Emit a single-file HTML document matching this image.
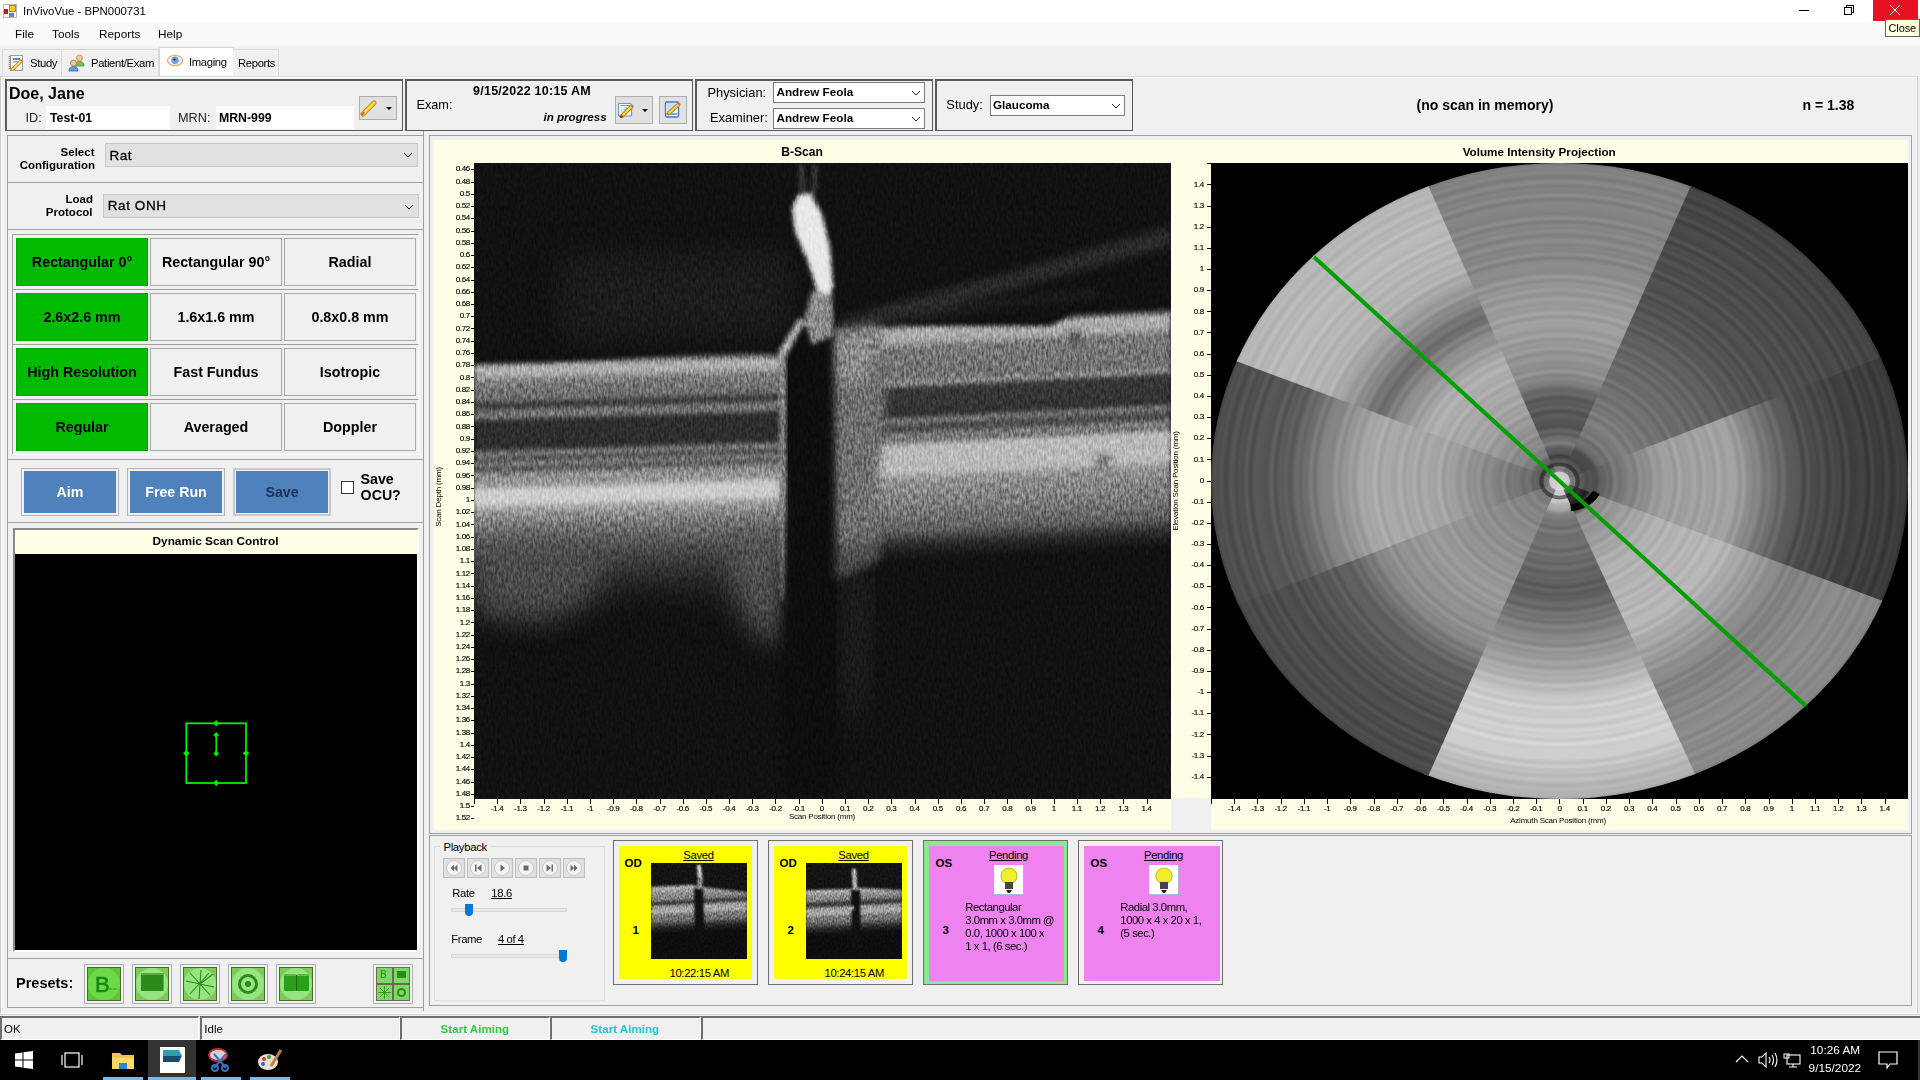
<!DOCTYPE html>
<html><head><meta charset="utf-8">
<style>
*{margin:0;padding:0;box-sizing:border-box}
html,body{width:1920px;height:1080px;overflow:hidden;background:#f0f0f0;font-family:"Liberation Sans",sans-serif;color:#000}
.a{position:absolute}
.t{position:absolute;white-space:nowrap;line-height:1}
.b{font-weight:bold}
.box{position:absolute;border:1px solid #a0a0a0}
.dbox{position:absolute;border:1px solid #646464}
.gbtn{position:absolute;background:#f0f0f0;border:1px solid #a9a9a9;font-weight:bold;font-size:14.3px;display:flex;align-items:center;justify-content:center}
.gbtn.on{background:#00bb00;border-color:#00a800}
.blue{position:absolute;background:#4f81bd;border:3px solid #f0f0f0;outline:1px solid #b4b4b4;font-weight:bold;font-size:14px;color:#fff;display:flex;align-items:center;justify-content:center}
.combo{position:absolute;background:#fff;border:1px solid #7a7a7a;font-weight:bold;font-size:12px}
.yl{fill:#000}
</style></head><body>

<!-- title bar -->
<div class="a" style="left:0;top:0;width:1920px;height:23px;background:#fff"></div>
<div id="titleicon" class="a" style="left:3px;top:4px;width:14px;height:14px">
 <div class="a" style="left:0;top:0;width:14px;height:14px;border:1px solid #b8b8b8;background:#fff"></div>
 <div class="a" style="left:6px;top:1px;width:7px;height:7px;background:#f8cc30;border:1px solid #b08a10"></div>
 <div class="a" style="left:1px;top:5px;width:4px;height:5px;background:#c81818"></div>
 <div class="a" style="left:6px;top:9px;width:5px;height:4px;background:#4a86e8"></div>
</div>
<div class="t" style="left:23px;top:6.3px;font-size:11.4px">InVivoVue - BPN000731</div>
<!-- window controls -->
<div class="a" style="left:1799px;top:10px;width:10px;height:1px;background:#000"></div>
<div class="a" style="left:1846px;top:5px;width:8px;height:8px;border:1px solid #000;background:#fff"></div>
<div class="a" style="left:1844px;top:7px;width:8px;height:8px;border:1px solid #000;background:#fff"></div>
<div class="a" style="left:1873px;top:0;width:45px;height:21px;background:#e81123"></div>
<svg class="a" style="left:1889px;top:4px" width="12" height="12"><path d="M1 1L11 11M11 1L1 11" stroke="#fff" stroke-width="1"/></svg>

<!-- menu -->
<div class="a" style="left:0;top:23px;width:1920px;height:23px;background:#f9f9f9"></div>
<div class="t" style="left:15px;top:28.8px;font-size:11.8px">File</div>
<div class="t" style="left:52px;top:28.8px;font-size:11.8px">Tools</div>
<div class="t" style="left:99px;top:28.8px;font-size:11.8px">Reports</div>
<div class="t" style="left:158px;top:28.8px;font-size:11.8px">Help</div>

<!-- tabs -->
<div id="tabs">
<div class="a" style="left:0;top:46px;width:1920px;height:31px;background:#f0f0f0"></div>
<div class="a" style="left:2px;top:49px;width:60px;height:28px;border:1px solid #d9d9d9;border-bottom:none;background:#f0f0f0"></div>
<div class="a" style="left:62px;top:49px;width:97px;height:28px;border:1px solid #d9d9d9;border-bottom:none;border-left:none;background:#f0f0f0"></div>
<div class="a" style="left:159px;top:47px;width:75px;height:31px;border:1px solid #d9d9d9;border-bottom:none;background:#fff"></div>
<div class="a" style="left:233px;top:49px;width:46px;height:28px;border:1px solid #d9d9d9;border-bottom:none;border-left:none;background:#f0f0f0"></div>
<!-- study icon -->
<svg class="a" style="left:8px;top:55px" width="16" height="16">
 <rect x="2.5" y="0.5" width="12" height="15" fill="#fff" stroke="#9a9a9a"/>
 <path d="M1.5 1V15" stroke="#d06030" stroke-width="1.5" stroke-dasharray="1 1"/>
 <rect x="5" y="3" width="7" height="2" fill="#5a8ad0"/><rect x="5" y="6" width="5" height="1.5" fill="#8ab0e0"/>
 <path d="M4 15L13 6" stroke="#c08020" stroke-width="3.5" stroke-linecap="round"/><path d="M4 15L13 6" stroke="#f8d860" stroke-width="2"/>
</svg>
<div class="t" style="left:30px;top:57.8px;font-size:11.3px;letter-spacing:-0.35px">Study</div>
<!-- patient icon -->
<svg class="a" style="left:68px;top:54px" width="18" height="18">
 <circle cx="11.5" cy="4" r="3" fill="#f0c890" stroke="#c89040" stroke-width="0.8"/>
 <path d="M7 12Q7 7.5 11.5 7.5Q16 7.5 16 12Z" fill="#70c060" stroke="#4a9040" stroke-width="0.8"/>
 <circle cx="5.5" cy="9" r="3" fill="#f0c890" stroke="#b07840" stroke-width="0.8"/>
 <path d="M1 17Q1 12.5 5.5 12.5Q10 12.5 10 17Z" fill="#5aa0e8" stroke="#3a70b0" stroke-width="0.8"/>
</svg>
<div class="t" style="left:91px;top:57.8px;font-size:11.3px;letter-spacing:-0.35px">Patient/Exam</div>
<!-- imaging eye -->
<svg class="a" style="left:166px;top:54px" width="18" height="14">
 <ellipse cx="9" cy="6.5" rx="7.5" ry="5.2" fill="#f4f4f8" stroke="#e8a870" stroke-width="1.2"/>
 <circle cx="9" cy="6.3" r="3.8" fill="#72a2e0"/>
 <circle cx="8.5" cy="5.5" r="1" fill="#000"/>
</svg>
<div class="t" style="left:189px;top:56.6px;font-size:11.3px;letter-spacing:-0.35px">Imaging</div>
<div class="t" style="left:238px;top:57.8px;font-size:11.3px;letter-spacing:-0.35px">Reports</div>
<div class="a" style="left:0;top:76px;width:1918px;height:1px;background:#d9d9d9"></div><div class="a" style="left:1px;top:77px;width:1916px;height:1px;background:#ffffff"></div>
</div>

<!-- header -->
<div id="header">
<!-- patient box -->
<div class="a" style="left:5px;top:79px;width:398px;height:52px;border:2px solid #5a5a5a;border-right-width:1px;border-bottom-width:1px"></div>
<div class="t b" style="left:9px;top:85.6px;font-size:16px">Doe, Jane</div>
<div class="a" style="left:46px;top:106px;width:124px;height:23px;background:#fff"></div>
<div class="t" style="left:25.5px;top:111.9px;font-size:12.7px;color:#222">ID:</div>
<div class="t b" style="left:50px;top:112.3px;font-size:12.3px">Test-01</div>
<div class="a" style="left:216px;top:106px;width:138px;height:23px;background:#fff"></div>
<div class="t" style="left:178px;top:111.7px;font-size:12.7px;color:#222">MRN:</div>
<div class="t b" style="left:219px;top:112.1px;font-size:12.3px">MRN-999</div>
<div class="a" style="left:359px;top:96px;width:38px;height:24px;background:#e1e1e1;border:1px solid #adadad"></div>
<svg class="a" style="left:360px;top:99px" width="20" height="18"><path d="M3 15L14 4" stroke="#c89000" stroke-width="5" stroke-linecap="round"/><path d="M3 15L14 4" stroke="#f5d850" stroke-width="3" stroke-linecap="round"/><path d="M2 16L4 13" stroke="#b07030" stroke-width="2"/></svg>
<svg class="a" style="left:386px;top:107px" width="7" height="4"><path d="M0 0H6L3 3Z" fill="#000"/></svg>

<!-- exam box -->
<div class="a" style="left:405px;top:79px;width:288px;height:52px;border:1px solid #5a5a5a;border-left-width:2px;border-top-width:2px"></div>
<div class="t" style="left:416.5px;top:98.7px;font-size:12.7px">Exam:</div>
<div class="t b" style="left:473px;top:85.3px;font-size:12.5px;letter-spacing:0.25px">9/15/2022 10:15 AM</div>
<div class="t b" style="left:543.5px;top:110.7px;font-size:11.6px;font-style:italic">in progress</div>
<div class="a" style="left:615px;top:96px;width:38px;height:28px;background:#e1e1e1;border:1px solid #adadad"></div>
<svg class="a" style="left:617px;top:102px" width="18" height="16">
 <rect x="1.5" y="1.5" width="13" height="12.5" rx="1" fill="#fff" stroke="#6a9ae0" stroke-width="1.2"/>
 <rect x="3.5" y="3" width="9.5" height="1" fill="#60b060"/>
 <path d="M4 6H5M4 8H5M4 10H5M6.5 6H10M6.5 8H10" stroke="#80a8e0" stroke-width="1"/>
 <path d="M4.5 14.5L14.5 4.5" stroke="#c07820" stroke-width="4" stroke-linecap="round"/>
 <path d="M4.5 14.5L14.5 4.5" stroke="#f4d850" stroke-width="2.2"/>
 <path d="M3.5 15.5L5.5 13.5" stroke="#704010" stroke-width="2"/>
</svg>
<svg class="a" style="left:642px;top:109px" width="7" height="4"><path d="M0 0H6L3 3Z" fill="#000"/></svg>
<div class="a" style="left:659px;top:96px;width:28px;height:28px;background:#e1e1e1;border:1px solid #adadad"></div>
<svg class="a" style="left:664px;top:101px" width="18" height="17">
 <rect x="1.5" y="1" width="13" height="15" rx="1.2" fill="#fff" stroke="#3a78d0" stroke-width="1.3"/>
 <rect x="2.5" y="2" width="9" height="9" fill="#c8dcf8"/>
 <rect x="2.5" y="12" width="11" height="2" fill="#5ab0f0"/>
 <path d="M4.5 12.5L14.5 3.5" stroke="#c07820" stroke-width="4" stroke-linecap="round"/>
 <path d="M4.5 12.5L14.5 3.5" stroke="#f4d850" stroke-width="2.2"/>
</svg>

<!-- physician box -->
<div class="a" style="left:695px;top:79px;width:238px;height:52px;border:1px solid #5a5a5a;border-left-width:2px;border-top-width:2px"></div>
<div class="t" style="left:707.4px;top:86.6px;font-size:12.9px">Physician:</div>
<div class="t" style="left:709.9px;top:111.8px;font-size:12.9px">Examiner:</div>
<div class="combo" style="left:773px;top:82px;width:152px;height:21px"></div>
<div class="t b" style="left:776.5px;top:86.1px;font-size:11.7px">Andrew Feola</div>
<svg class="a" style="left:911px;top:90px" width="10" height="6"><path d="M1 1L5 5L9 1" stroke="#222" fill="none"/></svg>
<div class="combo" style="left:773px;top:108px;width:152px;height:21px"></div>
<div class="t b" style="left:776.5px;top:111.6px;font-size:11.7px">Andrew Feola</div>
<svg class="a" style="left:911px;top:116px" width="10" height="6"><path d="M1 1L5 5L9 1" stroke="#222" fill="none"/></svg>

<!-- study box -->
<div class="a" style="left:935px;top:79px;width:198px;height:52px;border:1px solid #5a5a5a;border-left-width:2px;border-top-width:2px"></div>
<div class="t" style="left:946.3px;top:98.8px;font-size:12.9px">Study:</div>
<div class="combo" style="left:990px;top:95px;width:135px;height:21px"></div>
<div class="t b" style="left:993px;top:98.5px;font-size:11.7px">Glaucoma</div>
<svg class="a" style="left:1111px;top:103px" width="10" height="6"><path d="M1 1L5 5L9 1" stroke="#222" fill="none"/></svg>

<div class="t b" style="left:1416.5px;top:98.1px;font-size:14px">(no scan in memory)</div>
<div class="t b" style="left:1802.5px;top:98.0px;font-size:14px">n = 1.38</div>
</div>

<!-- left panel -->
<div id="left">
<!-- outer left panel border -->
<div class="a" style="left:0;top:76px;width:1px;height:938px;background:#c8c8c8"></div><div class="a" style="left:1px;top:77px;width:1px;height:936px;background:#fff"></div>
<div class="a" style="left:7px;top:135px;width:417px;height:48px;border:1px solid #a0a0a0"></div>
<div class="t b" style="left:0;top:146.9px;width:94.5px;text-align:right;font-size:11.5px">Select</div><div class="t b" style="left:0;top:160.1px;width:95px;text-align:right;font-size:11.5px">Configuration</div>
<div class="a" style="left:105px;top:143px;width:313px;height:24px;background:#e1e1e1;border:1px solid #c8c8c8"></div>
<div class="t" style="left:109.4px;top:148.7px;font-size:13.5px;letter-spacing:0.6px;-webkit-text-stroke:0.3px #000">Rat</div>
<svg class="a" style="left:403px;top:152px" width="10" height="6"><path d="M1 1L5 5L9 1" stroke="#000" fill="none"/></svg>
<div class="a" style="left:7px;top:182px;width:417px;height:48px;border:1px solid #a0a0a0"></div>
<div class="t b" style="left:0;top:193.9px;width:93px;text-align:right;font-size:11.5px">Load</div><div class="t b" style="left:0;top:207.1px;width:92.5px;text-align:right;font-size:11.5px">Protocol</div>
<div class="a" style="left:103px;top:194px;width:316px;height:24px;background:#e1e1e1;border:1px solid #c8c8c8"></div>
<div class="t" style="left:107.7px;top:199.1px;font-size:13.5px;letter-spacing:0.6px;-webkit-text-stroke:0.3px #000">Rat ONH</div>
<svg class="a" style="left:404px;top:204px" width="10" height="6"><path d="M1 1L5 5L9 1" stroke="#000" fill="none"/></svg>
<!-- grid -->
<div class="a" style="left:7px;top:229px;width:417px;height:231px;border:1px solid #a0a0a0"></div>
<div class="a" style="left:12px;top:234px;width:407px;height:56px;border:1px solid #a0a0a0;border-right-color:#fff;border-bottom-color:#fff"></div>
<div class="a" style="left:12px;top:289px;width:407px;height:56px;border:1px solid #a0a0a0;border-right-color:#fff;border-bottom-color:#fff"></div>
<div class="a" style="left:12px;top:344px;width:407px;height:56px;border:1px solid #a0a0a0;border-right-color:#fff;border-bottom-color:#fff"></div>
<div class="a" style="left:12px;top:399px;width:407px;height:56px;border:1px solid #a0a0a0;border-right-color:#fff;border-bottom-color:#fff"></div>
<div class="gbtn on" style="left:16px;top:238px;width:132px;height:48px">Rectangular 0°</div>
<div class="gbtn" style="left:150px;top:238px;width:132px;height:48px">Rectangular 90°</div>
<div class="gbtn" style="left:284px;top:238px;width:132px;height:48px">Radial</div>
<div class="gbtn on" style="left:16px;top:293px;width:132px;height:48px">2.6x2.6 mm</div>
<div class="gbtn" style="left:150px;top:293px;width:132px;height:48px">1.6x1.6 mm</div>
<div class="gbtn" style="left:284px;top:293px;width:132px;height:48px">0.8x0.8 mm</div>
<div class="gbtn on" style="left:16px;top:348px;width:132px;height:48px">High Resolution</div>
<div class="gbtn" style="left:150px;top:348px;width:132px;height:48px">Fast Fundus</div>
<div class="gbtn" style="left:284px;top:348px;width:132px;height:48px">Isotropic</div>
<div class="gbtn on" style="left:16px;top:403px;width:132px;height:48px">Regular</div>
<div class="gbtn" style="left:150px;top:403px;width:132px;height:48px">Averaged</div>
<div class="gbtn" style="left:284px;top:403px;width:132px;height:48px">Doppler</div>

<!-- action buttons -->
<div class="a" style="left:7px;top:459px;width:417px;height:64px;border:1px solid #a0a0a0"></div>
<div class="a" style="left:21px;top:468px;width:98px;height:48px;border:1px solid #b4b4b4;background:#f0f0f0"></div>
<div class="a" style="left:24px;top:471px;width:92px;height:42px;background:#4f81bd"></div>
<div class="t b" style="left:24px;top:485.0px;width:92px;text-align:center;font-size:14.2px;color:#fff">Aim</div>
<div class="a" style="left:127px;top:468px;width:98px;height:48px;border:1px solid #b4b4b4;background:#f0f0f0"></div>
<div class="a" style="left:130px;top:471px;width:92px;height:42px;background:#4f81bd"></div>
<div class="t b" style="left:130px;top:485.0px;width:92px;text-align:center;font-size:14.2px;color:#fff">Free Run</div>
<div class="a" style="left:233px;top:468px;width:98px;height:48px;border:2px solid #c8c8c8;background:#f0f0f0"></div>
<div class="a" style="left:236px;top:471px;width:92px;height:42px;background:#4f81bd"></div>
<div class="t b" style="left:236px;top:485.0px;width:92px;text-align:center;font-size:14.2px;color:#1b3157">Save</div>
<div class="a" style="left:341px;top:481px;width:13px;height:13px;background:#fff;border:1px solid #333"></div>
<div class="t b" style="left:360.6px;top:472.0px;font-size:14.2px">Save</div><div class="t b" style="left:360.6px;top:487.7px;font-size:14.2px">OCU?</div>
<!-- dynamic scan control -->
<div class="a" style="left:7px;top:522px;width:417px;height:437px;border:1px solid #a0a0a0"></div>
<div class="a" style="left:13px;top:528px;width:406px;height:424px;border:2px solid #8a8a8a;border-right-color:#fff;border-bottom-color:#fff;background:#000"></div>
<div class="a" style="left:15px;top:530px;width:403px;height:24px;background:#fffee6"></div>
<div class="t b" style="left:15px;top:535.9px;width:401px;text-align:center;font-size:11.8px">Dynamic Scan Control</div>
<svg class="a" style="left:180px;top:715px" width="72" height="75">
 <rect x="6.3" y="8.3" width="59.7" height="59.7" fill="none" stroke="#00ee00" stroke-width="1.8"/>
 <line x1="36.2" y1="20" x2="36.2" y2="38.5" stroke="#00ee00" stroke-width="1.6"/>
 <path d="M36.2 17L39 20L36.2 23L33.4 20Z M36.2 35.5L39 38.5L36.2 41.5L33.4 38.5Z" fill="#00ee00"/>
 <path d="M36.2 5L39 8.3L36.2 11.6L33.4 8.3Z M36.2 64.7L39 68L36.2 71.3L33.4 68Z M6.3 35.2L9.6 38.2L6.3 41.2L3 38.2Z M66 35.2L69.3 38.2L66 41.2L62.7 38.2Z" fill="#00ee00"/>
</svg>
<!-- presets -->
<div class="a" style="left:7px;top:958px;width:417px;height:50px;border:1px solid #a0a0a0"></div>
<div class="t b" style="left:16px;top:975.9px;font-size:14.5px">Presets:</div>
<div id="presets">
<div class="a" style="left:84px;top:964px;width:40px;height:40px;border:1px solid #b0b0b0;background:#f0f0f0"></div>
<div class="a" style="left:87px;top:967px;width:34px;height:34px;background:#58c838;border:1px solid #4a6a2a"></div>
<div class="a" style="left:88px;top:968px;width:32px;height:32px;border-radius:50%;background:#6ed848"></div>
<div class="t" style="left:95px;top:974px;font-size:22px;color:#108a10;-webkit-text-stroke:0.6px #108a10">B</div><div class="t" style="left:109px;top:987px;font-size:4px;color:#108a10">scan</div>
<div class="a" style="left:132px;top:964px;width:40px;height:40px;border:1px solid #b0b0b0;background:#f0f0f0"></div>
<div class="a" style="left:135px;top:967px;width:34px;height:34px;background:#78cc5a;border:1px solid #4a6a2a"></div>
<div class="a" style="left:136px;top:968px;width:32px;height:32px;border-radius:50%;background:#98e482"></div>
<div class="a" style="left:141px;top:973px;width:23px;height:18px;background:#2a8a1a;border-top:2px solid #58b040;border-right:1px solid #58b040"></div>
<div class="a" style="left:180px;top:964px;width:40px;height:40px;border:1px solid #b0b0b0;background:#f0f0f0"></div>
<div class="a" style="left:183px;top:967px;width:34px;height:34px;background:#78cc5a;border:1px solid #4a6a2a"></div>
<div class="a" style="left:184px;top:968px;width:32px;height:32px;border-radius:50%;background:#98e482"></div>
<svg class="a" style="left:184px;top:968px" width="32" height="32"><path d="M6 5L26 27M25 5L6 26M16 16L17 2M16 16L15 31M2 13L30 19M16 16L29 6" stroke="#2a8a1a" stroke-width="1.1"/></svg>
<div class="a" style="left:228px;top:964px;width:40px;height:40px;border:1px solid #b0b0b0;background:#f0f0f0"></div>
<div class="a" style="left:231px;top:967px;width:34px;height:34px;background:#78cc5a;border:1px solid #4a6a2a"></div>
<div class="a" style="left:232px;top:968px;width:32px;height:32px;border-radius:50%;background:#98e482"></div>
<div class="a" style="left:238px;top:974px;width:20px;height:20px;border-radius:50%;border:3px solid #2a8a1a"></div>
<div class="a" style="left:245px;top:981px;width:6px;height:6px;border-radius:50%;background:#2a8a1a"></div>
<div class="a" style="left:276px;top:964px;width:40px;height:40px;border:1px solid #b0b0b0;background:#f0f0f0"></div>
<div class="a" style="left:279px;top:967px;width:34px;height:34px;background:#78cc5a;border:1px solid #4a6a2a"></div>
<div class="a" style="left:280px;top:968px;width:32px;height:32px;border-radius:50%;background:#98e482"></div>
<div class="a" style="left:284px;top:974px;width:12px;height:17px;background:#2aa01a;border-top:2px solid #58c040;border-radius:1px"></div>
<div class="a" style="left:297px;top:974px;width:12px;height:17px;background:#2aa01a;border-top:2px solid #58c040;border-radius:1px"></div><div class="a" style="left:296px;top:975px;width:1px;height:16px;background:#1a6a10"></div>
<div class="a" style="left:373px;top:964px;width:40px;height:40px;border:1px solid #b0b0b0;background:#f0f0f0"></div>
<div class="a" style="left:376px;top:967px;width:34px;height:34px;background:#6a6a50;"></div>
<div class="a" style="left:377px;top:968px;width:15px;height:15px;background:#7ed868"></div>
<div class="a" style="left:394px;top:968px;width:15px;height:15px;background:#7ed868"></div>
<div class="a" style="left:377px;top:985px;width:15px;height:15px;background:#7ed868"></div>
<div class="a" style="left:394px;top:985px;width:15px;height:15px;background:#7ed868"></div>
<div class="t" style="left:380px;top:970px;font-size:10px;color:#1e8a1e">B</div>
<div class="a" style="left:397px;top:971px;width:9px;height:7px;background:#2a8a1a"></div>
<div class="a" style="left:397px;top:988px;width:9px;height:9px;border-radius:50%;border:2px solid #2a8a1a"></div>
<svg class="a" style="left:377px;top:985px" width="15" height="15"><path d="M7.5 1V14M1 7.5H14M3 3L12 12M12 3L3 12" stroke="#2a8a1a" stroke-width="0.8"/></svg>
</div>
</div>

<!-- charts -->
<div id="charts">
<div class="a" style="left:429px;top:135px;width:1483px;height:699px;border:1px solid #a0a0a0"></div>
<div class="a" style="left:434px;top:140px;width:1474px;height:690px;background:#fffee6"></div>
<div class="a" style="left:1171px;top:798px;width:40px;height:32px;background:#f0f0f0"></div>
<div class="a" style="left:1917px;top:76px;width:1px;height:938px;background:#c8c8c8"></div><div class="a" style="left:1916px;top:77px;width:1px;height:936px;background:#fff"></div>
<div class="t b" style="left:702px;top:145.8px;width:200px;text-align:center;font-size:12.1px">B-Scan</div>
<div class="t b" style="left:1389.2px;top:146.1px;width:300px;text-align:center;font-size:11.7px">Volume Intensity Projection</div>
<div class="t" style="left:420px;top:165.4px;width:50px;text-align:right;font-size:8px;letter-spacing:-0.3px;-webkit-text-stroke:0.15px #000">0.46</div>
<div class="a" style="left:471px;top:169px;width:3px;height:1px;background:#000"></div>
<div class="t" style="left:420px;top:177.6px;width:50px;text-align:right;font-size:8px;letter-spacing:-0.3px;-webkit-text-stroke:0.15px #000">0.48</div>
<div class="a" style="left:471px;top:182px;width:3px;height:1px;background:#000"></div>
<div class="t" style="left:420px;top:189.9px;width:50px;text-align:right;font-size:8px;letter-spacing:-0.3px;-webkit-text-stroke:0.15px #000">0.5</div>
<div class="a" style="left:471px;top:194px;width:3px;height:1px;background:#000"></div>
<div class="t" style="left:420px;top:202.1px;width:50px;text-align:right;font-size:8px;letter-spacing:-0.3px;-webkit-text-stroke:0.15px #000">0.52</div>
<div class="a" style="left:471px;top:206px;width:3px;height:1px;background:#000"></div>
<div class="t" style="left:420px;top:214.4px;width:50px;text-align:right;font-size:8px;letter-spacing:-0.3px;-webkit-text-stroke:0.15px #000">0.54</div>
<div class="a" style="left:471px;top:218px;width:3px;height:1px;background:#000"></div>
<div class="t" style="left:420px;top:226.6px;width:50px;text-align:right;font-size:8px;letter-spacing:-0.3px;-webkit-text-stroke:0.15px #000">0.56</div>
<div class="a" style="left:471px;top:231px;width:3px;height:1px;background:#000"></div>
<div class="t" style="left:420px;top:238.9px;width:50px;text-align:right;font-size:8px;letter-spacing:-0.3px;-webkit-text-stroke:0.15px #000">0.58</div>
<div class="a" style="left:471px;top:243px;width:3px;height:1px;background:#000"></div>
<div class="t" style="left:420px;top:251.1px;width:50px;text-align:right;font-size:8px;letter-spacing:-0.3px;-webkit-text-stroke:0.15px #000">0.6</div>
<div class="a" style="left:471px;top:255px;width:3px;height:1px;background:#000"></div>
<div class="t" style="left:420px;top:263.4px;width:50px;text-align:right;font-size:8px;letter-spacing:-0.3px;-webkit-text-stroke:0.15px #000">0.62</div>
<div class="a" style="left:471px;top:267px;width:3px;height:1px;background:#000"></div>
<div class="t" style="left:420px;top:275.6px;width:50px;text-align:right;font-size:8px;letter-spacing:-0.3px;-webkit-text-stroke:0.15px #000">0.64</div>
<div class="a" style="left:471px;top:280px;width:3px;height:1px;background:#000"></div>
<div class="t" style="left:420px;top:287.9px;width:50px;text-align:right;font-size:8px;letter-spacing:-0.3px;-webkit-text-stroke:0.15px #000">0.66</div>
<div class="a" style="left:471px;top:292px;width:3px;height:1px;background:#000"></div>
<div class="t" style="left:420px;top:300.1px;width:50px;text-align:right;font-size:8px;letter-spacing:-0.3px;-webkit-text-stroke:0.15px #000">0.68</div>
<div class="a" style="left:471px;top:304px;width:3px;height:1px;background:#000"></div>
<div class="t" style="left:420px;top:312.3px;width:50px;text-align:right;font-size:8px;letter-spacing:-0.3px;-webkit-text-stroke:0.15px #000">0.7</div>
<div class="a" style="left:471px;top:316px;width:3px;height:1px;background:#000"></div>
<div class="t" style="left:420px;top:324.6px;width:50px;text-align:right;font-size:8px;letter-spacing:-0.3px;-webkit-text-stroke:0.15px #000">0.72</div>
<div class="a" style="left:471px;top:328px;width:3px;height:1px;background:#000"></div>
<div class="t" style="left:420px;top:336.8px;width:50px;text-align:right;font-size:8px;letter-spacing:-0.3px;-webkit-text-stroke:0.15px #000">0.74</div>
<div class="a" style="left:471px;top:341px;width:3px;height:1px;background:#000"></div>
<div class="t" style="left:420px;top:349.1px;width:50px;text-align:right;font-size:8px;letter-spacing:-0.3px;-webkit-text-stroke:0.15px #000">0.76</div>
<div class="a" style="left:471px;top:353px;width:3px;height:1px;background:#000"></div>
<div class="t" style="left:420px;top:361.3px;width:50px;text-align:right;font-size:8px;letter-spacing:-0.3px;-webkit-text-stroke:0.15px #000">0.78</div>
<div class="a" style="left:471px;top:365px;width:3px;height:1px;background:#000"></div>
<div class="t" style="left:420px;top:373.6px;width:50px;text-align:right;font-size:8px;letter-spacing:-0.3px;-webkit-text-stroke:0.15px #000">0.8</div>
<div class="a" style="left:471px;top:377px;width:3px;height:1px;background:#000"></div>
<div class="t" style="left:420px;top:385.8px;width:50px;text-align:right;font-size:8px;letter-spacing:-0.3px;-webkit-text-stroke:0.15px #000">0.82</div>
<div class="a" style="left:471px;top:390px;width:3px;height:1px;background:#000"></div>
<div class="t" style="left:420px;top:398.1px;width:50px;text-align:right;font-size:8px;letter-spacing:-0.3px;-webkit-text-stroke:0.15px #000">0.84</div>
<div class="a" style="left:471px;top:402px;width:3px;height:1px;background:#000"></div>
<div class="t" style="left:420px;top:410.3px;width:50px;text-align:right;font-size:8px;letter-spacing:-0.3px;-webkit-text-stroke:0.15px #000">0.86</div>
<div class="a" style="left:471px;top:414px;width:3px;height:1px;background:#000"></div>
<div class="t" style="left:420px;top:422.5px;width:50px;text-align:right;font-size:8px;letter-spacing:-0.3px;-webkit-text-stroke:0.15px #000">0.88</div>
<div class="a" style="left:471px;top:426px;width:3px;height:1px;background:#000"></div>
<div class="t" style="left:420px;top:434.8px;width:50px;text-align:right;font-size:8px;letter-spacing:-0.3px;-webkit-text-stroke:0.15px #000">0.9</div>
<div class="a" style="left:471px;top:439px;width:3px;height:1px;background:#000"></div>
<div class="t" style="left:420px;top:447.0px;width:50px;text-align:right;font-size:8px;letter-spacing:-0.3px;-webkit-text-stroke:0.15px #000">0.92</div>
<div class="a" style="left:471px;top:451px;width:3px;height:1px;background:#000"></div>
<div class="t" style="left:420px;top:459.3px;width:50px;text-align:right;font-size:8px;letter-spacing:-0.3px;-webkit-text-stroke:0.15px #000">0.94</div>
<div class="a" style="left:471px;top:463px;width:3px;height:1px;background:#000"></div>
<div class="t" style="left:420px;top:471.5px;width:50px;text-align:right;font-size:8px;letter-spacing:-0.3px;-webkit-text-stroke:0.15px #000">0.96</div>
<div class="a" style="left:471px;top:475px;width:3px;height:1px;background:#000"></div>
<div class="t" style="left:420px;top:483.8px;width:50px;text-align:right;font-size:8px;letter-spacing:-0.3px;-webkit-text-stroke:0.15px #000">0.98</div>
<div class="a" style="left:471px;top:488px;width:3px;height:1px;background:#000"></div>
<div class="t" style="left:420px;top:496.0px;width:50px;text-align:right;font-size:8px;letter-spacing:-0.3px;-webkit-text-stroke:0.15px #000">1</div>
<div class="a" style="left:471px;top:500px;width:3px;height:1px;background:#000"></div>
<div class="t" style="left:420px;top:508.3px;width:50px;text-align:right;font-size:8px;letter-spacing:-0.3px;-webkit-text-stroke:0.15px #000">1.02</div>
<div class="a" style="left:471px;top:512px;width:3px;height:1px;background:#000"></div>
<div class="t" style="left:420px;top:520.5px;width:50px;text-align:right;font-size:8px;letter-spacing:-0.3px;-webkit-text-stroke:0.15px #000">1.04</div>
<div class="a" style="left:471px;top:524px;width:3px;height:1px;background:#000"></div>
<div class="t" style="left:420px;top:532.8px;width:50px;text-align:right;font-size:8px;letter-spacing:-0.3px;-webkit-text-stroke:0.15px #000">1.06</div>
<div class="a" style="left:471px;top:537px;width:3px;height:1px;background:#000"></div>
<div class="t" style="left:420px;top:545.0px;width:50px;text-align:right;font-size:8px;letter-spacing:-0.3px;-webkit-text-stroke:0.15px #000">1.08</div>
<div class="a" style="left:471px;top:549px;width:3px;height:1px;background:#000"></div>
<div class="t" style="left:420px;top:557.2px;width:50px;text-align:right;font-size:8px;letter-spacing:-0.3px;-webkit-text-stroke:0.15px #000">1.1</div>
<div class="a" style="left:471px;top:561px;width:3px;height:1px;background:#000"></div>
<div class="t" style="left:420px;top:569.5px;width:50px;text-align:right;font-size:8px;letter-spacing:-0.3px;-webkit-text-stroke:0.15px #000">1.12</div>
<div class="a" style="left:471px;top:573px;width:3px;height:1px;background:#000"></div>
<div class="t" style="left:420px;top:581.7px;width:50px;text-align:right;font-size:8px;letter-spacing:-0.3px;-webkit-text-stroke:0.15px #000">1.14</div>
<div class="a" style="left:471px;top:586px;width:3px;height:1px;background:#000"></div>
<div class="t" style="left:420px;top:594.0px;width:50px;text-align:right;font-size:8px;letter-spacing:-0.3px;-webkit-text-stroke:0.15px #000">1.16</div>
<div class="a" style="left:471px;top:598px;width:3px;height:1px;background:#000"></div>
<div class="t" style="left:420px;top:606.2px;width:50px;text-align:right;font-size:8px;letter-spacing:-0.3px;-webkit-text-stroke:0.15px #000">1.18</div>
<div class="a" style="left:471px;top:610px;width:3px;height:1px;background:#000"></div>
<div class="t" style="left:420px;top:618.5px;width:50px;text-align:right;font-size:8px;letter-spacing:-0.3px;-webkit-text-stroke:0.15px #000">1.2</div>
<div class="a" style="left:471px;top:622px;width:3px;height:1px;background:#000"></div>
<div class="t" style="left:420px;top:630.7px;width:50px;text-align:right;font-size:8px;letter-spacing:-0.3px;-webkit-text-stroke:0.15px #000">1.22</div>
<div class="a" style="left:471px;top:635px;width:3px;height:1px;background:#000"></div>
<div class="t" style="left:420px;top:643.0px;width:50px;text-align:right;font-size:8px;letter-spacing:-0.3px;-webkit-text-stroke:0.15px #000">1.24</div>
<div class="a" style="left:471px;top:647px;width:3px;height:1px;background:#000"></div>
<div class="t" style="left:420px;top:655.2px;width:50px;text-align:right;font-size:8px;letter-spacing:-0.3px;-webkit-text-stroke:0.15px #000">1.26</div>
<div class="a" style="left:471px;top:659px;width:3px;height:1px;background:#000"></div>
<div class="t" style="left:420px;top:667.4px;width:50px;text-align:right;font-size:8px;letter-spacing:-0.3px;-webkit-text-stroke:0.15px #000">1.28</div>
<div class="a" style="left:471px;top:671px;width:3px;height:1px;background:#000"></div>
<div class="t" style="left:420px;top:679.7px;width:50px;text-align:right;font-size:8px;letter-spacing:-0.3px;-webkit-text-stroke:0.15px #000">1.3</div>
<div class="a" style="left:471px;top:684px;width:3px;height:1px;background:#000"></div>
<div class="t" style="left:420px;top:691.9px;width:50px;text-align:right;font-size:8px;letter-spacing:-0.3px;-webkit-text-stroke:0.15px #000">1.32</div>
<div class="a" style="left:471px;top:696px;width:3px;height:1px;background:#000"></div>
<div class="t" style="left:420px;top:704.2px;width:50px;text-align:right;font-size:8px;letter-spacing:-0.3px;-webkit-text-stroke:0.15px #000">1.34</div>
<div class="a" style="left:471px;top:708px;width:3px;height:1px;background:#000"></div>
<div class="t" style="left:420px;top:716.4px;width:50px;text-align:right;font-size:8px;letter-spacing:-0.3px;-webkit-text-stroke:0.15px #000">1.36</div>
<div class="a" style="left:471px;top:720px;width:3px;height:1px;background:#000"></div>
<div class="t" style="left:420px;top:728.7px;width:50px;text-align:right;font-size:8px;letter-spacing:-0.3px;-webkit-text-stroke:0.15px #000">1.38</div>
<div class="a" style="left:471px;top:733px;width:3px;height:1px;background:#000"></div>
<div class="t" style="left:420px;top:740.9px;width:50px;text-align:right;font-size:8px;letter-spacing:-0.3px;-webkit-text-stroke:0.15px #000">1.4</div>
<div class="a" style="left:471px;top:745px;width:3px;height:1px;background:#000"></div>
<div class="t" style="left:420px;top:753.2px;width:50px;text-align:right;font-size:8px;letter-spacing:-0.3px;-webkit-text-stroke:0.15px #000">1.42</div>
<div class="a" style="left:471px;top:757px;width:3px;height:1px;background:#000"></div>
<div class="t" style="left:420px;top:765.4px;width:50px;text-align:right;font-size:8px;letter-spacing:-0.3px;-webkit-text-stroke:0.15px #000">1.44</div>
<div class="a" style="left:471px;top:769px;width:3px;height:1px;background:#000"></div>
<div class="t" style="left:420px;top:777.6px;width:50px;text-align:right;font-size:8px;letter-spacing:-0.3px;-webkit-text-stroke:0.15px #000">1.46</div>
<div class="a" style="left:471px;top:782px;width:3px;height:1px;background:#000"></div>
<div class="t" style="left:420px;top:789.9px;width:50px;text-align:right;font-size:8px;letter-spacing:-0.3px;-webkit-text-stroke:0.15px #000">1.48</div>
<div class="a" style="left:471px;top:794px;width:3px;height:1px;background:#000"></div>
<div class="t" style="left:420px;top:802.1px;width:50px;text-align:right;font-size:8px;letter-spacing:-0.3px;-webkit-text-stroke:0.15px #000">1.5</div>
<div class="a" style="left:471px;top:806px;width:3px;height:1px;background:#000"></div>
<div class="t" style="left:420px;top:814.4px;width:50px;text-align:right;font-size:8px;letter-spacing:-0.3px;-webkit-text-stroke:0.15px #000">1.52</div>
<div class="a" style="left:471px;top:818px;width:3px;height:1px;background:#000"></div>
<div class="t" style="left:472.2px;top:804.5px;width:50px;text-align:center;font-size:8px;letter-spacing:-0.3px;-webkit-text-stroke:0.15px #000">-1.4</div>
<div class="a" style="left:497px;top:799px;width:1px;height:5px;background:#000"></div>
<div class="t" style="left:495.4px;top:804.5px;width:50px;text-align:center;font-size:8px;letter-spacing:-0.3px;-webkit-text-stroke:0.15px #000">-1.3</div>
<div class="a" style="left:520px;top:799px;width:1px;height:5px;background:#000"></div>
<div class="t" style="left:518.6px;top:804.5px;width:50px;text-align:center;font-size:8px;letter-spacing:-0.3px;-webkit-text-stroke:0.15px #000">-1.2</div>
<div class="a" style="left:544px;top:799px;width:1px;height:5px;background:#000"></div>
<div class="t" style="left:541.8px;top:804.5px;width:50px;text-align:center;font-size:8px;letter-spacing:-0.3px;-webkit-text-stroke:0.15px #000">-1.1</div>
<div class="a" style="left:567px;top:799px;width:1px;height:5px;background:#000"></div>
<div class="t" style="left:565.0px;top:804.5px;width:50px;text-align:center;font-size:8px;letter-spacing:-0.3px;-webkit-text-stroke:0.15px #000">-1</div>
<div class="a" style="left:590px;top:799px;width:1px;height:5px;background:#000"></div>
<div class="t" style="left:588.1px;top:804.5px;width:50px;text-align:center;font-size:8px;letter-spacing:-0.3px;-webkit-text-stroke:0.15px #000">-0.9</div>
<div class="a" style="left:613px;top:799px;width:1px;height:5px;background:#000"></div>
<div class="t" style="left:611.3px;top:804.5px;width:50px;text-align:center;font-size:8px;letter-spacing:-0.3px;-webkit-text-stroke:0.15px #000">-0.8</div>
<div class="a" style="left:636px;top:799px;width:1px;height:5px;background:#000"></div>
<div class="t" style="left:634.5px;top:804.5px;width:50px;text-align:center;font-size:8px;letter-spacing:-0.3px;-webkit-text-stroke:0.15px #000">-0.7</div>
<div class="a" style="left:660px;top:799px;width:1px;height:5px;background:#000"></div>
<div class="t" style="left:657.7px;top:804.5px;width:50px;text-align:center;font-size:8px;letter-spacing:-0.3px;-webkit-text-stroke:0.15px #000">-0.6</div>
<div class="a" style="left:683px;top:799px;width:1px;height:5px;background:#000"></div>
<div class="t" style="left:680.9px;top:804.5px;width:50px;text-align:center;font-size:8px;letter-spacing:-0.3px;-webkit-text-stroke:0.15px #000">-0.5</div>
<div class="a" style="left:706px;top:799px;width:1px;height:5px;background:#000"></div>
<div class="t" style="left:704.1px;top:804.5px;width:50px;text-align:center;font-size:8px;letter-spacing:-0.3px;-webkit-text-stroke:0.15px #000">-0.4</div>
<div class="a" style="left:729px;top:799px;width:1px;height:5px;background:#000"></div>
<div class="t" style="left:727.3px;top:804.5px;width:50px;text-align:center;font-size:8px;letter-spacing:-0.3px;-webkit-text-stroke:0.15px #000">-0.3</div>
<div class="a" style="left:752px;top:799px;width:1px;height:5px;background:#000"></div>
<div class="t" style="left:750.5px;top:804.5px;width:50px;text-align:center;font-size:8px;letter-spacing:-0.3px;-webkit-text-stroke:0.15px #000">-0.2</div>
<div class="a" style="left:775px;top:799px;width:1px;height:5px;background:#000"></div>
<div class="t" style="left:773.7px;top:804.5px;width:50px;text-align:center;font-size:8px;letter-spacing:-0.3px;-webkit-text-stroke:0.15px #000">-0.1</div>
<div class="a" style="left:799px;top:799px;width:1px;height:5px;background:#000"></div>
<div class="t" style="left:796.9px;top:804.5px;width:50px;text-align:center;font-size:8px;letter-spacing:-0.3px;-webkit-text-stroke:0.15px #000">0</div>
<div class="a" style="left:822px;top:799px;width:1px;height:5px;background:#000"></div>
<div class="t" style="left:820.0px;top:804.5px;width:50px;text-align:center;font-size:8px;letter-spacing:-0.3px;-webkit-text-stroke:0.15px #000">0.1</div>
<div class="a" style="left:845px;top:799px;width:1px;height:5px;background:#000"></div>
<div class="t" style="left:843.2px;top:804.5px;width:50px;text-align:center;font-size:8px;letter-spacing:-0.3px;-webkit-text-stroke:0.15px #000">0.2</div>
<div class="a" style="left:868px;top:799px;width:1px;height:5px;background:#000"></div>
<div class="t" style="left:866.4px;top:804.5px;width:50px;text-align:center;font-size:8px;letter-spacing:-0.3px;-webkit-text-stroke:0.15px #000">0.3</div>
<div class="a" style="left:891px;top:799px;width:1px;height:5px;background:#000"></div>
<div class="t" style="left:889.6px;top:804.5px;width:50px;text-align:center;font-size:8px;letter-spacing:-0.3px;-webkit-text-stroke:0.15px #000">0.4</div>
<div class="a" style="left:915px;top:799px;width:1px;height:5px;background:#000"></div>
<div class="t" style="left:912.8px;top:804.5px;width:50px;text-align:center;font-size:8px;letter-spacing:-0.3px;-webkit-text-stroke:0.15px #000">0.5</div>
<div class="a" style="left:938px;top:799px;width:1px;height:5px;background:#000"></div>
<div class="t" style="left:936.0px;top:804.5px;width:50px;text-align:center;font-size:8px;letter-spacing:-0.3px;-webkit-text-stroke:0.15px #000">0.6</div>
<div class="a" style="left:961px;top:799px;width:1px;height:5px;background:#000"></div>
<div class="t" style="left:959.2px;top:804.5px;width:50px;text-align:center;font-size:8px;letter-spacing:-0.3px;-webkit-text-stroke:0.15px #000">0.7</div>
<div class="a" style="left:984px;top:799px;width:1px;height:5px;background:#000"></div>
<div class="t" style="left:982.4px;top:804.5px;width:50px;text-align:center;font-size:8px;letter-spacing:-0.3px;-webkit-text-stroke:0.15px #000">0.8</div>
<div class="a" style="left:1007px;top:799px;width:1px;height:5px;background:#000"></div>
<div class="t" style="left:1005.6px;top:804.5px;width:50px;text-align:center;font-size:8px;letter-spacing:-0.3px;-webkit-text-stroke:0.15px #000">0.9</div>
<div class="a" style="left:1031px;top:799px;width:1px;height:5px;background:#000"></div>
<div class="t" style="left:1028.8px;top:804.5px;width:50px;text-align:center;font-size:8px;letter-spacing:-0.3px;-webkit-text-stroke:0.15px #000">1</div>
<div class="a" style="left:1054px;top:799px;width:1px;height:5px;background:#000"></div>
<div class="t" style="left:1051.9px;top:804.5px;width:50px;text-align:center;font-size:8px;letter-spacing:-0.3px;-webkit-text-stroke:0.15px #000">1.1</div>
<div class="a" style="left:1077px;top:799px;width:1px;height:5px;background:#000"></div>
<div class="t" style="left:1075.1px;top:804.5px;width:50px;text-align:center;font-size:8px;letter-spacing:-0.3px;-webkit-text-stroke:0.15px #000">1.2</div>
<div class="a" style="left:1100px;top:799px;width:1px;height:5px;background:#000"></div>
<div class="t" style="left:1098.3px;top:804.5px;width:50px;text-align:center;font-size:8px;letter-spacing:-0.3px;-webkit-text-stroke:0.15px #000">1.3</div>
<div class="a" style="left:1123px;top:799px;width:1px;height:5px;background:#000"></div>
<div class="t" style="left:1121.5px;top:804.5px;width:50px;text-align:center;font-size:8px;letter-spacing:-0.3px;-webkit-text-stroke:0.15px #000">1.4</div>
<div class="a" style="left:1147px;top:799px;width:1px;height:5px;background:#000"></div>
<div class="a" style="left:474px;top:799px;width:1px;height:5px;background:#000"></div>
<div class="t" style="left:722px;top:813px;width:200px;text-align:center;font-size:8px;letter-spacing:-0.2px">Scan Position (mm)</div>
<div class="t" style="left:339px;top:493px;width:200px;text-align:center;font-size:8px;letter-spacing:-0.2px;transform:rotate(-90deg)">Scan Depth (mm)</div>
<div class="t" style="left:1154px;top:772.8px;width:50px;text-align:right;font-size:8px;letter-spacing:-0.3px;-webkit-text-stroke:0.15px #000">-1.4</div>
<div class="a" style="left:1207px;top:777px;width:4px;height:1px;background:#000"></div>
<div class="t" style="left:1154px;top:751.6px;width:50px;text-align:right;font-size:8px;letter-spacing:-0.3px;-webkit-text-stroke:0.15px #000">-1.3</div>
<div class="a" style="left:1207px;top:756px;width:4px;height:1px;background:#000"></div>
<div class="t" style="left:1154px;top:730.5px;width:50px;text-align:right;font-size:8px;letter-spacing:-0.3px;-webkit-text-stroke:0.15px #000">-1.2</div>
<div class="a" style="left:1207px;top:734px;width:4px;height:1px;background:#000"></div>
<div class="t" style="left:1154px;top:709.3px;width:50px;text-align:right;font-size:8px;letter-spacing:-0.3px;-webkit-text-stroke:0.15px #000">-1.1</div>
<div class="a" style="left:1207px;top:713px;width:4px;height:1px;background:#000"></div>
<div class="t" style="left:1154px;top:688.1px;width:50px;text-align:right;font-size:8px;letter-spacing:-0.3px;-webkit-text-stroke:0.15px #000">-1</div>
<div class="a" style="left:1207px;top:692px;width:4px;height:1px;background:#000"></div>
<div class="t" style="left:1154px;top:667.0px;width:50px;text-align:right;font-size:8px;letter-spacing:-0.3px;-webkit-text-stroke:0.15px #000">-0.9</div>
<div class="a" style="left:1207px;top:671px;width:4px;height:1px;background:#000"></div>
<div class="t" style="left:1154px;top:645.9px;width:50px;text-align:right;font-size:8px;letter-spacing:-0.3px;-webkit-text-stroke:0.15px #000">-0.8</div>
<div class="a" style="left:1207px;top:650px;width:4px;height:1px;background:#000"></div>
<div class="t" style="left:1154px;top:624.7px;width:50px;text-align:right;font-size:8px;letter-spacing:-0.3px;-webkit-text-stroke:0.15px #000">-0.7</div>
<div class="a" style="left:1207px;top:629px;width:4px;height:1px;background:#000"></div>
<div class="t" style="left:1154px;top:603.6px;width:50px;text-align:right;font-size:8px;letter-spacing:-0.3px;-webkit-text-stroke:0.15px #000">-0.6</div>
<div class="a" style="left:1207px;top:607px;width:4px;height:1px;background:#000"></div>
<div class="t" style="left:1154px;top:582.4px;width:50px;text-align:right;font-size:8px;letter-spacing:-0.3px;-webkit-text-stroke:0.15px #000">-0.5</div>
<div class="a" style="left:1207px;top:586px;width:4px;height:1px;background:#000"></div>
<div class="t" style="left:1154px;top:561.2px;width:50px;text-align:right;font-size:8px;letter-spacing:-0.3px;-webkit-text-stroke:0.15px #000">-0.4</div>
<div class="a" style="left:1207px;top:565px;width:4px;height:1px;background:#000"></div>
<div class="t" style="left:1154px;top:540.1px;width:50px;text-align:right;font-size:8px;letter-spacing:-0.3px;-webkit-text-stroke:0.15px #000">-0.3</div>
<div class="a" style="left:1207px;top:544px;width:4px;height:1px;background:#000"></div>
<div class="t" style="left:1154px;top:519.0px;width:50px;text-align:right;font-size:8px;letter-spacing:-0.3px;-webkit-text-stroke:0.15px #000">-0.2</div>
<div class="a" style="left:1207px;top:523px;width:4px;height:1px;background:#000"></div>
<div class="t" style="left:1154px;top:497.8px;width:50px;text-align:right;font-size:8px;letter-spacing:-0.3px;-webkit-text-stroke:0.15px #000">-0.1</div>
<div class="a" style="left:1207px;top:502px;width:4px;height:1px;background:#000"></div>
<div class="t" style="left:1154px;top:476.7px;width:50px;text-align:right;font-size:8px;letter-spacing:-0.3px;-webkit-text-stroke:0.15px #000">0</div>
<div class="a" style="left:1207px;top:481px;width:4px;height:1px;background:#000"></div>
<div class="t" style="left:1154px;top:455.5px;width:50px;text-align:right;font-size:8px;letter-spacing:-0.3px;-webkit-text-stroke:0.15px #000">0.1</div>
<div class="a" style="left:1207px;top:459px;width:4px;height:1px;background:#000"></div>
<div class="t" style="left:1154px;top:434.4px;width:50px;text-align:right;font-size:8px;letter-spacing:-0.3px;-webkit-text-stroke:0.15px #000">0.2</div>
<div class="a" style="left:1207px;top:438px;width:4px;height:1px;background:#000"></div>
<div class="t" style="left:1154px;top:413.2px;width:50px;text-align:right;font-size:8px;letter-spacing:-0.3px;-webkit-text-stroke:0.15px #000">0.3</div>
<div class="a" style="left:1207px;top:417px;width:4px;height:1px;background:#000"></div>
<div class="t" style="left:1154px;top:392.1px;width:50px;text-align:right;font-size:8px;letter-spacing:-0.3px;-webkit-text-stroke:0.15px #000">0.4</div>
<div class="a" style="left:1207px;top:396px;width:4px;height:1px;background:#000"></div>
<div class="t" style="left:1154px;top:370.9px;width:50px;text-align:right;font-size:8px;letter-spacing:-0.3px;-webkit-text-stroke:0.15px #000">0.5</div>
<div class="a" style="left:1207px;top:375px;width:4px;height:1px;background:#000"></div>
<div class="t" style="left:1154px;top:349.8px;width:50px;text-align:right;font-size:8px;letter-spacing:-0.3px;-webkit-text-stroke:0.15px #000">0.6</div>
<div class="a" style="left:1207px;top:354px;width:4px;height:1px;background:#000"></div>
<div class="t" style="left:1154px;top:328.6px;width:50px;text-align:right;font-size:8px;letter-spacing:-0.3px;-webkit-text-stroke:0.15px #000">0.7</div>
<div class="a" style="left:1207px;top:332px;width:4px;height:1px;background:#000"></div>
<div class="t" style="left:1154px;top:307.5px;width:50px;text-align:right;font-size:8px;letter-spacing:-0.3px;-webkit-text-stroke:0.15px #000">0.8</div>
<div class="a" style="left:1207px;top:311px;width:4px;height:1px;background:#000"></div>
<div class="t" style="left:1154px;top:286.3px;width:50px;text-align:right;font-size:8px;letter-spacing:-0.3px;-webkit-text-stroke:0.15px #000">0.9</div>
<div class="a" style="left:1207px;top:290px;width:4px;height:1px;background:#000"></div>
<div class="t" style="left:1154px;top:265.2px;width:50px;text-align:right;font-size:8px;letter-spacing:-0.3px;-webkit-text-stroke:0.15px #000">1</div>
<div class="a" style="left:1207px;top:269px;width:4px;height:1px;background:#000"></div>
<div class="t" style="left:1154px;top:244.0px;width:50px;text-align:right;font-size:8px;letter-spacing:-0.3px;-webkit-text-stroke:0.15px #000">1.1</div>
<div class="a" style="left:1207px;top:248px;width:4px;height:1px;background:#000"></div>
<div class="t" style="left:1154px;top:222.9px;width:50px;text-align:right;font-size:8px;letter-spacing:-0.3px;-webkit-text-stroke:0.15px #000">1.2</div>
<div class="a" style="left:1207px;top:227px;width:4px;height:1px;background:#000"></div>
<div class="t" style="left:1154px;top:201.7px;width:50px;text-align:right;font-size:8px;letter-spacing:-0.3px;-webkit-text-stroke:0.15px #000">1.3</div>
<div class="a" style="left:1207px;top:206px;width:4px;height:1px;background:#000"></div>
<div class="t" style="left:1154px;top:180.6px;width:50px;text-align:right;font-size:8px;letter-spacing:-0.3px;-webkit-text-stroke:0.15px #000">1.4</div>
<div class="a" style="left:1207px;top:184px;width:4px;height:1px;background:#000"></div>
<div class="a" style="left:1207px;top:163px;width:4px;height:1px;background:#000"></div>
<div class="t" style="left:1209.2px;top:804.5px;width:50px;text-align:center;font-size:8px;letter-spacing:-0.3px;-webkit-text-stroke:0.15px #000">-1.4</div>
<div class="a" style="left:1234px;top:799px;width:1px;height:5px;background:#000"></div>
<div class="t" style="left:1232.5px;top:804.5px;width:50px;text-align:center;font-size:8px;letter-spacing:-0.3px;-webkit-text-stroke:0.15px #000">-1.3</div>
<div class="a" style="left:1257px;top:799px;width:1px;height:5px;background:#000"></div>
<div class="t" style="left:1255.7px;top:804.5px;width:50px;text-align:center;font-size:8px;letter-spacing:-0.3px;-webkit-text-stroke:0.15px #000">-1.2</div>
<div class="a" style="left:1281px;top:799px;width:1px;height:5px;background:#000"></div>
<div class="t" style="left:1278.9px;top:804.5px;width:50px;text-align:center;font-size:8px;letter-spacing:-0.3px;-webkit-text-stroke:0.15px #000">-1.1</div>
<div class="a" style="left:1304px;top:799px;width:1px;height:5px;background:#000"></div>
<div class="t" style="left:1302.2px;top:804.5px;width:50px;text-align:center;font-size:8px;letter-spacing:-0.3px;-webkit-text-stroke:0.15px #000">-1</div>
<div class="a" style="left:1327px;top:799px;width:1px;height:5px;background:#000"></div>
<div class="t" style="left:1325.4px;top:804.5px;width:50px;text-align:center;font-size:8px;letter-spacing:-0.3px;-webkit-text-stroke:0.15px #000">-0.9</div>
<div class="a" style="left:1350px;top:799px;width:1px;height:5px;background:#000"></div>
<div class="t" style="left:1348.6px;top:804.5px;width:50px;text-align:center;font-size:8px;letter-spacing:-0.3px;-webkit-text-stroke:0.15px #000">-0.8</div>
<div class="a" style="left:1374px;top:799px;width:1px;height:5px;background:#000"></div>
<div class="t" style="left:1371.8px;top:804.5px;width:50px;text-align:center;font-size:8px;letter-spacing:-0.3px;-webkit-text-stroke:0.15px #000">-0.7</div>
<div class="a" style="left:1397px;top:799px;width:1px;height:5px;background:#000"></div>
<div class="t" style="left:1395.1px;top:804.5px;width:50px;text-align:center;font-size:8px;letter-spacing:-0.3px;-webkit-text-stroke:0.15px #000">-0.6</div>
<div class="a" style="left:1420px;top:799px;width:1px;height:5px;background:#000"></div>
<div class="t" style="left:1418.3px;top:804.5px;width:50px;text-align:center;font-size:8px;letter-spacing:-0.3px;-webkit-text-stroke:0.15px #000">-0.5</div>
<div class="a" style="left:1443px;top:799px;width:1px;height:5px;background:#000"></div>
<div class="t" style="left:1441.5px;top:804.5px;width:50px;text-align:center;font-size:8px;letter-spacing:-0.3px;-webkit-text-stroke:0.15px #000">-0.4</div>
<div class="a" style="left:1467px;top:799px;width:1px;height:5px;background:#000"></div>
<div class="t" style="left:1464.8px;top:804.5px;width:50px;text-align:center;font-size:8px;letter-spacing:-0.3px;-webkit-text-stroke:0.15px #000">-0.3</div>
<div class="a" style="left:1490px;top:799px;width:1px;height:5px;background:#000"></div>
<div class="t" style="left:1488.0px;top:804.5px;width:50px;text-align:center;font-size:8px;letter-spacing:-0.3px;-webkit-text-stroke:0.15px #000">-0.2</div>
<div class="a" style="left:1513px;top:799px;width:1px;height:5px;background:#000"></div>
<div class="t" style="left:1511.2px;top:804.5px;width:50px;text-align:center;font-size:8px;letter-spacing:-0.3px;-webkit-text-stroke:0.15px #000">-0.1</div>
<div class="a" style="left:1536px;top:799px;width:1px;height:5px;background:#000"></div>
<div class="t" style="left:1534.5px;top:804.5px;width:50px;text-align:center;font-size:8px;letter-spacing:-0.3px;-webkit-text-stroke:0.15px #000">0</div>
<div class="a" style="left:1559px;top:799px;width:1px;height:5px;background:#000"></div>
<div class="t" style="left:1557.7px;top:804.5px;width:50px;text-align:center;font-size:8px;letter-spacing:-0.3px;-webkit-text-stroke:0.15px #000">0.1</div>
<div class="a" style="left:1583px;top:799px;width:1px;height:5px;background:#000"></div>
<div class="t" style="left:1580.9px;top:804.5px;width:50px;text-align:center;font-size:8px;letter-spacing:-0.3px;-webkit-text-stroke:0.15px #000">0.2</div>
<div class="a" style="left:1606px;top:799px;width:1px;height:5px;background:#000"></div>
<div class="t" style="left:1604.1px;top:804.5px;width:50px;text-align:center;font-size:8px;letter-spacing:-0.3px;-webkit-text-stroke:0.15px #000">0.3</div>
<div class="a" style="left:1629px;top:799px;width:1px;height:5px;background:#000"></div>
<div class="t" style="left:1627.4px;top:804.5px;width:50px;text-align:center;font-size:8px;letter-spacing:-0.3px;-webkit-text-stroke:0.15px #000">0.4</div>
<div class="a" style="left:1652px;top:799px;width:1px;height:5px;background:#000"></div>
<div class="t" style="left:1650.6px;top:804.5px;width:50px;text-align:center;font-size:8px;letter-spacing:-0.3px;-webkit-text-stroke:0.15px #000">0.5</div>
<div class="a" style="left:1676px;top:799px;width:1px;height:5px;background:#000"></div>
<div class="t" style="left:1673.8px;top:804.5px;width:50px;text-align:center;font-size:8px;letter-spacing:-0.3px;-webkit-text-stroke:0.15px #000">0.6</div>
<div class="a" style="left:1699px;top:799px;width:1px;height:5px;background:#000"></div>
<div class="t" style="left:1697.1px;top:804.5px;width:50px;text-align:center;font-size:8px;letter-spacing:-0.3px;-webkit-text-stroke:0.15px #000">0.7</div>
<div class="a" style="left:1722px;top:799px;width:1px;height:5px;background:#000"></div>
<div class="t" style="left:1720.3px;top:804.5px;width:50px;text-align:center;font-size:8px;letter-spacing:-0.3px;-webkit-text-stroke:0.15px #000">0.8</div>
<div class="a" style="left:1745px;top:799px;width:1px;height:5px;background:#000"></div>
<div class="t" style="left:1743.5px;top:804.5px;width:50px;text-align:center;font-size:8px;letter-spacing:-0.3px;-webkit-text-stroke:0.15px #000">0.9</div>
<div class="a" style="left:1769px;top:799px;width:1px;height:5px;background:#000"></div>
<div class="t" style="left:1766.8px;top:804.5px;width:50px;text-align:center;font-size:8px;letter-spacing:-0.3px;-webkit-text-stroke:0.15px #000">1</div>
<div class="a" style="left:1792px;top:799px;width:1px;height:5px;background:#000"></div>
<div class="t" style="left:1790.0px;top:804.5px;width:50px;text-align:center;font-size:8px;letter-spacing:-0.3px;-webkit-text-stroke:0.15px #000">1.1</div>
<div class="a" style="left:1815px;top:799px;width:1px;height:5px;background:#000"></div>
<div class="t" style="left:1813.2px;top:804.5px;width:50px;text-align:center;font-size:8px;letter-spacing:-0.3px;-webkit-text-stroke:0.15px #000">1.2</div>
<div class="a" style="left:1838px;top:799px;width:1px;height:5px;background:#000"></div>
<div class="t" style="left:1836.4px;top:804.5px;width:50px;text-align:center;font-size:8px;letter-spacing:-0.3px;-webkit-text-stroke:0.15px #000">1.3</div>
<div class="a" style="left:1861px;top:799px;width:1px;height:5px;background:#000"></div>
<div class="t" style="left:1859.7px;top:804.5px;width:50px;text-align:center;font-size:8px;letter-spacing:-0.3px;-webkit-text-stroke:0.15px #000">1.4</div>
<div class="a" style="left:1885px;top:799px;width:1px;height:5px;background:#000"></div>
<div class="a" style="left:1211px;top:799px;width:1px;height:5px;background:#000"></div>
<div class="t" style="left:1458px;top:817px;width:200px;text-align:center;font-size:8px;letter-spacing:-0.2px">Azimuth Scan Position (mm)</div>
<div class="t" style="left:1076px;top:477px;width:200px;text-align:center;font-size:8px;letter-spacing:-0.2px;transform:rotate(-90deg)">Elevation Scan Position (mm)</div>
<svg class="a" style="left:474px;top:163px" width="697" height="636" viewBox="474 163 697 636" preserveAspectRatio="none">
<defs>
<filter id="b1" x="-20%" y="-20%" width="140%" height="140%" color-interpolation-filters="sRGB"><feGaussianBlur stdDeviation="2"/></filter>
<filter id="b2" x="-30%" y="-30%" width="160%" height="160%" color-interpolation-filters="sRGB"><feGaussianBlur stdDeviation="5"/></filter>
<filter id="b3" x="-50%" y="-50%" width="200%" height="200%" color-interpolation-filters="sRGB"><feGaussianBlur stdDeviation="14"/></filter>
<linearGradient id="gl" gradientUnits="userSpaceOnUse" x1="600" y1="356" x2="608.1" y2="625"><stop offset="0.0000" stop-color="rgb(17,17,17)"/><stop offset="0.0297" stop-color="rgb(180,180,180)"/><stop offset="0.0595" stop-color="rgb(172,172,172)"/><stop offset="0.0855" stop-color="rgb(122,122,122)"/><stop offset="0.1561" stop-color="rgb(105,105,105)"/><stop offset="0.1673" stop-color="rgb(55,55,55)"/><stop offset="0.1822" stop-color="rgb(58,58,58)"/><stop offset="0.1933" stop-color="rgb(118,118,118)"/><stop offset="0.2193" stop-color="rgb(112,112,112)"/><stop offset="0.2305" stop-color="rgb(45,45,45)"/><stop offset="0.3346" stop-color="rgb(45,45,45)"/><stop offset="0.3494" stop-color="rgb(135,135,135)"/><stop offset="0.3717" stop-color="rgb(68,68,68)"/><stop offset="0.3903" stop-color="rgb(135,135,135)"/><stop offset="0.4089" stop-color="rgb(72,72,72)"/><stop offset="0.4275" stop-color="rgb(140,140,140)"/><stop offset="0.4684" stop-color="rgb(150,150,150)"/><stop offset="0.4907" stop-color="rgb(205,205,205)"/><stop offset="0.5353" stop-color="rgb(205,205,205)"/><stop offset="0.5576" stop-color="rgb(160,160,160)"/><stop offset="0.6097" stop-color="rgb(125,125,125)"/><stop offset="0.6654" stop-color="rgb(98,98,98)"/><stop offset="0.7212" stop-color="rgb(75,75,75)"/><stop offset="0.7955" stop-color="rgb(48,48,48)"/><stop offset="0.9071" stop-color="rgb(24,24,24)"/><stop offset="1.0000" stop-color="rgb(17,17,17)"/></linearGradient>
<linearGradient id="gr" gradientUnits="userSpaceOnUse" x1="1000" y1="312" x2="1012.1" y2="555"><stop offset="0.0000" stop-color="rgb(17,17,17)"/><stop offset="0.0247" stop-color="rgb(40,40,40)"/><stop offset="0.0494" stop-color="rgb(175,175,175)"/><stop offset="0.1070" stop-color="rgb(165,165,165)"/><stop offset="0.1235" stop-color="rgb(120,120,120)"/><stop offset="0.2593" stop-color="rgb(112,112,112)"/><stop offset="0.2716" stop-color="rgb(145,145,145)"/><stop offset="0.2840" stop-color="rgb(130,130,130)"/><stop offset="0.2922" stop-color="rgb(55,55,55)"/><stop offset="0.4115" stop-color="rgb(50,50,50)"/><stop offset="0.4239" stop-color="rgb(140,140,140)"/><stop offset="0.4403" stop-color="rgb(85,85,85)"/><stop offset="0.4691" stop-color="rgb(70,70,70)"/><stop offset="0.4856" stop-color="rgb(130,130,130)"/><stop offset="0.5144" stop-color="rgb(110,110,110)"/><stop offset="0.5267" stop-color="rgb(185,185,185)"/><stop offset="0.6420" stop-color="rgb(185,185,185)"/><stop offset="0.6708" stop-color="rgb(145,145,145)"/><stop offset="0.7737" stop-color="rgb(125,125,125)"/><stop offset="0.8765" stop-color="rgb(95,95,95)"/><stop offset="0.9383" stop-color="rgb(40,40,40)"/><stop offset="1.0000" stop-color="rgb(17,17,17)"/></linearGradient>
<filter id="nz" x="0" y="0" width="100%" height="100%" color-interpolation-filters="sRGB"><feTurbulence type="fractalNoise" baseFrequency="0.45 0.18" numOctaves="2" seed="3"/><feGaussianBlur stdDeviation="0.4"/><feColorMatrix type="matrix" values="1.8 0 0 0 -0.4  1.8 0 0 0 -0.4  1.8 0 0 0 -0.4  0 0 0 0 1"/></filter>
<filter id="nz2" x="0" y="0" width="100%" height="100%"><feTurbulence type="fractalNoise" baseFrequency="0.6 0.25" numOctaves="1" seed="7"/><feColorMatrix type="matrix" values="0 0 0 0 0  0 0 0 0 0  0 0 0 0 0  -1.5 0 0 0 0.75"/></filter>
</defs>
<rect x="474" y="163" width="697" height="636" fill="#111111"/>
<g filter="url(#b3)">
 <path d="M474 480 L784 480 L784 650 L740 655 L700 600 L640 590 L600 620 L540 650 L474 655 Z" fill="url(#gl)"/>
</g>
<g filter="url(#b1)">
 <path d="M474 364 L520 363 L560 362 L620 359 L700 354 L757 352 L775 355 L784 362 L784 560 L474 560 Z" fill="url(#gl)"/>
</g>
<g filter="url(#b3)">
 <path d="M474 545 L610 545 L590 600 L545 622 L474 615 Z" fill="#505050" fill-opacity="0.85"/>
 <path d="M728 540 L784 535 L784 640 L760 640 L735 600 Z" fill="#585858" fill-opacity="0.85"/>
</g>
<g filter="url(#b1)">
 <path d="M838 326 L870 325 L950 326 L1050 326 L1062 320 L1075 314 L1110 312 L1171 308 L1171 600 L838 600 Z" fill="url(#gr)"/>
</g>
<g filter="url(#b2)">
 <path d="M833 335 L878 324 L886 390 L882 440 L866 520 L846 545 L836 540 Z" fill="#6c6c6c"/>
 <path d="M846 330 L878 324 L880 360 L850 370 Z" fill="#8a8a8a"/>
 <circle cx="1075" cy="337" r="6" fill="#3a3a3a"/>
 <ellipse cx="1103" cy="461" rx="8" ry="5" fill="#505050"/>
</g>
<g filter="url(#b2)">
 <path d="M835 322 Q900 300 1000 275 Q1090 250 1171 226 L1171 246 Q1090 268 1000 292 Q920 314 845 332 Z" fill="#2c2c2c"/>
 <path d="M880 318 Q1000 300 1100 290 L1100 296 Q1000 306 885 326 Z" fill="#222222"/>
</g>
<g filter="url(#b3)">
 <path d="M560 255 L790 250 L790 335 L560 340 Z" fill="#1c1c1c"/>
</g>
<g filter="url(#b2)">
 <path d="M786 362 L792 335 L815 322 L833 338 L838 540 L845 700 L830 799 L786 799 L782 700 Z" fill="#0e0e0e"/>
</g>
<g filter="url(#b1)">
 <path d="M779 358 L786 356 L786 480 L783 600 L781 600 Z" fill="#8a8a8a"/>
</g>
<g filter="url(#b3)">
 <path d="M846 570 L866 575 L864 680 L852 740 L846 700 Z" fill="#262626"/>
</g>
<g filter="url(#b1)">
 <path d="M798 164 L804 164 L806 196 L800 198 Z M812 164 L818 164 L816 196 L811 196 Z" fill="#3a3a3a"/>
 <path d="M792 208 L798 195 L810 193 L822 214 L830 248 L833 285 L830 300 L820 300 L808 262 L795 232 Z" fill="#e8e8e8"/>
 <path d="M812 290 L832 296 L834 335 L812 345 L804 320 Z" fill="#8a8a8a"/>
 <path d="M799 318 L805 322 L786 356 L779 362 L778 352 Z" fill="#b0b0b0"/>
</g>
<g filter="url(#b2)">
 <path d="M834 330 L878 322 L880 560 L836 580 Z" fill="#707070" fill-opacity="0.6"/>
 <path d="M836 340 L870 330 L872 380 L840 385 Z" fill="#9a9a9a" fill-opacity="0.6"/>
</g>
<rect x="474" y="163" width="697" height="636" filter="url(#nz)" opacity="0.32" style="mix-blend-mode:overlay"/>
</svg>
<svg class="a" style="left:1211px;top:163px" width="697" height="636" viewBox="-1000 -1000 2000 2000" preserveAspectRatio="none">
<defs>
<radialGradient id="g270" gradientUnits="userSpaceOnUse" cx="0" cy="0" r="1000">
 <stop offset="0" stop-color="rgb(200,200,200)"/>
 <stop offset="0.05" stop-color="rgb(110,110,110)"/>
 <stop offset="0.08" stop-color="rgb(60,60,60)"/>
 <stop offset="0.12" stop-color="rgb(120,120,120)"/>
 <stop offset="0.17" stop-color="rgb(80,80,80)"/>
 <stop offset="0.27" stop-color="rgb(90,90,90)"/>
 <stop offset="0.33" stop-color="rgb(140,140,140)"/>
 <stop offset="0.5" stop-color="rgb(162,162,162)"/>
 <stop offset="0.62" stop-color="rgb(150,150,150)"/>
 <stop offset="0.7" stop-color="rgb(135,135,135)"/>
 <stop offset="0.85" stop-color="rgb(132,132,132)"/>
 <stop offset="1" stop-color="rgb(128,128,128)"/>
</radialGradient>
<radialGradient id="g225" gradientUnits="userSpaceOnUse" cx="0" cy="0" r="1000">
 <stop offset="0" stop-color="rgb(200,200,200)"/>
 <stop offset="0.05" stop-color="rgb(90,90,90)"/>
 <stop offset="0.09" stop-color="rgb(60,60,60)"/>
 <stop offset="0.13" stop-color="rgb(110,110,110)"/>
 <stop offset="0.2" stop-color="rgb(125,125,125)"/>
 <stop offset="0.3" stop-color="rgb(112,112,112)"/>
 <stop offset="0.45" stop-color="rgb(98,98,98)"/>
 <stop offset="0.6" stop-color="rgb(78,78,78)"/>
 <stop offset="0.8" stop-color="rgb(70,70,70)"/>
 <stop offset="1" stop-color="rgb(62,62,62)"/>
</radialGradient>
<radialGradient id="g180" gradientUnits="userSpaceOnUse" cx="0" cy="0" r="1000">
 <stop offset="0" stop-color="rgb(200,200,200)"/>
 <stop offset="0.05" stop-color="rgb(100,100,100)"/>
 <stop offset="0.09" stop-color="rgb(70,70,70)"/>
 <stop offset="0.15" stop-color="rgb(110,110,110)"/>
 <stop offset="0.3" stop-color="rgb(160,160,160)"/>
 <stop offset="0.5" stop-color="rgb(165,165,165)"/>
 <stop offset="0.6" stop-color="rgb(115,115,115)"/>
 <stop offset="0.7" stop-color="rgb(75,75,75)"/>
 <stop offset="0.85" stop-color="rgb(58,58,58)"/>
 <stop offset="1" stop-color="rgb(52,52,52)"/>
</radialGradient>
<radialGradient id="g135" gradientUnits="userSpaceOnUse" cx="0" cy="0" r="1000">
 <stop offset="0" stop-color="rgb(200,200,200)"/>
 <stop offset="0.05" stop-color="rgb(60,60,60)"/>
 <stop offset="0.085" stop-color="rgb(20,20,20)"/>
 <stop offset="0.12" stop-color="rgb(140,140,140)"/>
 <stop offset="0.3" stop-color="rgb(180,180,180)"/>
 <stop offset="0.5" stop-color="rgb(188,188,188)"/>
 <stop offset="0.62" stop-color="rgb(155,155,155)"/>
 <stop offset="0.72" stop-color="rgb(128,128,128)"/>
 <stop offset="0.85" stop-color="rgb(140,140,140)"/>
 <stop offset="1" stop-color="rgb(135,135,135)"/>
</radialGradient>
<radialGradient id="g90" gradientUnits="userSpaceOnUse" cx="0" cy="0" r="1000">
 <stop offset="0" stop-color="rgb(230,230,230)"/>
 <stop offset="0.06" stop-color="rgb(210,210,210)"/>
 <stop offset="0.12" stop-color="rgb(115,115,115)"/>
 <stop offset="0.25" stop-color="rgb(105,105,105)"/>
 <stop offset="0.35" stop-color="rgb(88,88,88)"/>
 <stop offset="0.45" stop-color="rgb(120,120,120)"/>
 <stop offset="0.6" stop-color="rgb(170,170,170)"/>
 <stop offset="0.7" stop-color="rgb(210,210,210)"/>
 <stop offset="0.85" stop-color="rgb(215,215,215)"/>
 <stop offset="0.95" stop-color="rgb(188,188,188)"/>
 <stop offset="1" stop-color="rgb(178,178,178)"/>
</radialGradient>
<radialGradient id="g45" gradientUnits="userSpaceOnUse" cx="0" cy="0" r="1000">
 <stop offset="0" stop-color="rgb(200,200,200)"/>
 <stop offset="0.05" stop-color="rgb(120,120,120)"/>
 <stop offset="0.1" stop-color="rgb(130,130,130)"/>
 <stop offset="0.2" stop-color="rgb(140,140,140)"/>
 <stop offset="0.4" stop-color="rgb(155,155,155)"/>
 <stop offset="0.55" stop-color="rgb(140,140,140)"/>
 <stop offset="0.65" stop-color="rgb(95,95,95)"/>
 <stop offset="0.8" stop-color="rgb(75,75,75)"/>
 <stop offset="1" stop-color="rgb(68,68,68)"/>
</radialGradient>
<radialGradient id="g360" gradientUnits="userSpaceOnUse" cx="0" cy="0" r="1000">
 <stop offset="0" stop-color="rgb(200,200,200)"/>
 <stop offset="0.05" stop-color="rgb(90,90,90)"/>
 <stop offset="0.1" stop-color="rgb(110,110,110)"/>
 <stop offset="0.2" stop-color="rgb(135,135,135)"/>
 <stop offset="0.35" stop-color="rgb(168,168,168)"/>
 <stop offset="0.55" stop-color="rgb(172,172,172)"/>
 <stop offset="0.68" stop-color="rgb(130,130,130)"/>
 <stop offset="0.78" stop-color="rgb(88,88,88)"/>
 <stop offset="0.9" stop-color="rgb(78,78,78)"/>
 <stop offset="1" stop-color="rgb(72,72,72)"/>
</radialGradient>
<radialGradient id="g315" gradientUnits="userSpaceOnUse" cx="0" cy="0" r="1000">
 <stop offset="0" stop-color="rgb(200,200,200)"/>
 <stop offset="0.05" stop-color="rgb(80,80,80)"/>
 <stop offset="0.1" stop-color="rgb(130,130,130)"/>
 <stop offset="0.25" stop-color="rgb(165,165,165)"/>
 <stop offset="0.4" stop-color="rgb(180,180,180)"/>
 <stop offset="0.5" stop-color="rgb(140,140,140)"/>
 <stop offset="0.56" stop-color="rgb(105,105,105)"/>
 <stop offset="0.64" stop-color="rgb(150,150,150)"/>
 <stop offset="0.72" stop-color="rgb(182,182,182)"/>
 <stop offset="0.85" stop-color="rgb(190,190,190)"/>
 <stop offset="1" stop-color="rgb(185,185,185)"/>
</radialGradient>
<radialGradient id="rings" gradientUnits="userSpaceOnUse" cx="0" cy="0" r="23" spreadMethod="repeat"><stop offset="0" stop-color="#fff" stop-opacity="0.035"/><stop offset="0.5" stop-color="#000" stop-opacity="0.035"/><stop offset="1" stop-color="#fff" stop-opacity="0.035"/></radialGradient>
<radialGradient id="rings2" gradientUnits="userSpaceOnUse" cx="0" cy="0" r="37" spreadMethod="repeat"><stop offset="0" stop-color="#000" stop-opacity="0.04"/><stop offset="0.3" stop-color="#fff" stop-opacity="0.05"/><stop offset="1" stop-color="#000" stop-opacity="0.04"/></radialGradient>
</defs>
<rect x="-1000" y="-1000" width="2000" height="2000" fill="#000"/>
<path d="M0 0 L389.1 -921.2 A1000 1000 0 0 0 -389.1 -921.2 Z" fill="url(#g270)"/>
<path d="M0 0 L926.5 -376.2 A1000 1000 0 0 0 376.2 -926.5 Z" fill="url(#g225)"/>
<path d="M0 0 L921.2 389.1 A1000 1000 0 0 0 921.2 -389.1 Z" fill="url(#g180)"/>
<path d="M0 0 L376.2 926.5 A1000 1000 0 0 0 926.5 376.2 Z" fill="url(#g135)"/>
<path d="M0 0 L-389.1 921.2 A1000 1000 0 0 0 389.1 921.2 Z" fill="url(#g90)"/>
<path d="M0 0 L-926.5 376.2 A1000 1000 0 0 0 -376.2 926.5 Z" fill="url(#g45)"/>
<path d="M0 0 L-921.2 -389.1 A1000 1000 0 0 0 -921.2 389.1 Z" fill="url(#g360)"/>
<path d="M0 0 L-376.2 -926.5 A1000 1000 0 0 0 -926.5 -376.2 Z" fill="url(#g315)"/>
<circle cx="0" cy="0" r="1000" fill="url(#rings)"/>
<circle cx="0" cy="0" r="1000" fill="url(#rings2)"/>
<circle cx="0" cy="0" r="52" fill="none" stroke="#1a1a1a" stroke-width="12" stroke-opacity="0.55"/>
<circle cx="0" cy="0" r="30" fill="#d8d8d8" fill-opacity="0.8"/>
<path d="M32 84 A92 92 0 0 0 106 36" fill="none" stroke="#000" stroke-width="22"/>
</svg>
<svg class="a" style="left:1211px;top:163px" width="697" height="636"><line x1="103" y1="94" x2="595" y2="543" stroke="#00a000" stroke-width="4"/></svg>
</div>

<!-- bottom -->
<div id="bottom">
<div class="a" style="left:429px;top:835px;width:1483px;height:171px;border:1px solid #a0a0a0"></div>
<div class="a" style="left:423px;top:131px;width:1px;height:880px;background:#a0a0a0"></div>
<div class="a" style="left:434px;top:846px;width:171px;height:155px;border:1px solid #dcdcdc"></div>
<div class="a" style="left:440px;top:840px;width:50px;height:14px;background:#f0f0f0"></div>
<div class="t" style="left:443.4px;top:841.5px;font-size:11.3px;letter-spacing:-0.3px">Playback</div>
<div class="a" style="left:443px;top:858px;width:22px;height:20px;background:#e1e1e1;border:1px solid #bdbdbd"></div>
<div class="a" style="left:446px;top:860px;width:16px;height:16px;border-radius:50%;background:#f4f4f4;border:1px solid #c8c8c8"></div>
<svg class="a" style="left:446px;top:860px" width="16" height="16" viewBox="0 0 16 16"><path d="M8 4.5L4.5 8L8 11.5ZM11.5 4.5L8 8L11.5 11.5Z" fill="#6a6a6a"/></svg>
<div class="a" style="left:467px;top:858px;width:22px;height:20px;background:#e1e1e1;border:1px solid #bdbdbd"></div>
<div class="a" style="left:470px;top:860px;width:16px;height:16px;border-radius:50%;background:#f4f4f4;border:1px solid #c8c8c8"></div>
<svg class="a" style="left:470px;top:860px" width="16" height="16" viewBox="0 0 16 16"><path d="M5 4.5H6.5V11.5H5ZM11.5 4.5L7 8L11.5 11.5Z" fill="#6a6a6a"/></svg>
<div class="a" style="left:491px;top:858px;width:22px;height:20px;background:#e1e1e1;border:1px solid #bdbdbd"></div>
<div class="a" style="left:494px;top:860px;width:16px;height:16px;border-radius:50%;background:#f4f4f4;border:1px solid #c8c8c8"></div>
<svg class="a" style="left:494px;top:860px" width="16" height="16" viewBox="0 0 16 16"><path d="M6.5 4.5L11 8L6.5 11.5Z" fill="#6a6a6a"/></svg>
<div class="a" style="left:515px;top:858px;width:22px;height:20px;background:#e1e1e1;border:1px solid #bdbdbd"></div>
<div class="a" style="left:518px;top:860px;width:16px;height:16px;border-radius:50%;background:#f4f4f4;border:1px solid #c8c8c8"></div>
<svg class="a" style="left:518px;top:860px" width="16" height="16" viewBox="0 0 16 16"><path d="M5.5 5.5H10.5V10.5H5.5Z" fill="#6a6a6a"/></svg>
<div class="a" style="left:539px;top:858px;width:22px;height:20px;background:#e1e1e1;border:1px solid #bdbdbd"></div>
<div class="a" style="left:542px;top:860px;width:16px;height:16px;border-radius:50%;background:#f4f4f4;border:1px solid #c8c8c8"></div>
<svg class="a" style="left:542px;top:860px" width="16" height="16" viewBox="0 0 16 16"><path d="M9.5 4.5H11V11.5H9.5ZM4.5 4.5L9 8L4.5 11.5Z" fill="#6a6a6a"/></svg>
<div class="a" style="left:563px;top:858px;width:22px;height:20px;background:#e1e1e1;border:1px solid #bdbdbd"></div>
<div class="a" style="left:566px;top:860px;width:16px;height:16px;border-radius:50%;background:#f4f4f4;border:1px solid #c8c8c8"></div>
<svg class="a" style="left:566px;top:860px" width="16" height="16" viewBox="0 0 16 16"><path d="M4.5 4.5L8 8L4.5 11.5ZM8 4.5L11.5 8L8 11.5Z" fill="#6a6a6a"/></svg>
<div class="t" style="left:452.2px;top:888.1px;font-size:11.3px;letter-spacing:-0.3px">Rate</div>
<div class="t" style="left:491.2px;top:888.1px;font-size:11.3px;letter-spacing:-0.3px;text-decoration:underline">18.6</div>
<div class="a" style="left:451px;top:908px;width:116px;height:4px;background:#e7eaea;border:1px solid #d6d6d6"></div>
<div class="a" style="left:465px;top:904px;width:8px;height:12px;background:#0078d7;border-radius:0 0 4px 4px"></div>
<div class="t" style="left:451.3px;top:934.4px;font-size:11.3px;letter-spacing:-0.4px">Frame</div>
<div class="t" style="left:497.9px;top:934.4px;font-size:11.3px;letter-spacing:-0.4px;text-decoration:underline">4 of 4</div>
<div class="a" style="left:451px;top:954px;width:116px;height:4px;background:#e7eaea;border:1px solid #d6d6d6"></div>
<div class="a" style="left:559px;top:950px;width:8px;height:12px;background:#0078d7;border-radius:0 0 4px 4px"></div>
<svg width="0" height="0" style="position:absolute"><defs><filter id="tb" x="-10%" y="-10%" width="120%" height="120%" color-interpolation-filters="sRGB"><feGaussianBlur stdDeviation="0.8"/></filter><filter id="tnz" x="0" y="0" width="100%" height="100%" color-interpolation-filters="sRGB"><feTurbulence type="fractalNoise" baseFrequency="0.7 0.4" numOctaves="1" seed="5"/><feColorMatrix type="matrix" values="1.8 0 0 0 -0.4  1.8 0 0 0 -0.4  1.8 0 0 0 -0.4  0 0 0 0 1"/></filter></defs></svg>
<div class="a" style="left:613px;top:840px;width:145px;height:145px;border:1px solid #6e6e6e;background:#f0f0f0"></div>
<div class="a" style="left:619px;top:846px;width:133px;height:133px;background:#ffff00"></div>
<div class="t b" style="left:624.5px;top:857.8px;font-size:11.5px">OD</div>
<div class="t b" style="left:632.5px;top:925.3px;font-size:11.5px">1</div>
<div class="t" style="left:678.5px;top:850.4px;width:40px;text-align:center;font-size:11.3px;letter-spacing:-0.3px;text-decoration:underline">Saved</div>
<svg class="a" style="left:651px;top:863px" width="96" height="96" viewBox="0 0 96 96"><defs><linearGradient id="tg1" gradientUnits="userSpaceOnUse" x1="48" y1="20" x2="50.4" y2="68"><stop offset="0.000" stop-color="rgb(14,14,14)"/><stop offset="0.062" stop-color="rgb(185,185,185)"/><stop offset="0.146" stop-color="rgb(150,150,150)"/><stop offset="0.333" stop-color="rgb(120,120,120)"/><stop offset="0.354" stop-color="rgb(60,60,60)"/><stop offset="0.417" stop-color="rgb(60,60,60)"/><stop offset="0.438" stop-color="rgb(150,150,150)"/><stop offset="0.583" stop-color="rgb(175,175,175)"/><stop offset="0.625" stop-color="rgb(120,120,120)"/><stop offset="0.750" stop-color="rgb(110,110,110)"/><stop offset="0.875" stop-color="rgb(40,40,40)"/><stop offset="1.000" stop-color="rgb(14,14,14)"/></linearGradient></defs><rect width="96" height="96" fill="#141414"/><g filter="url(#tb)"><path d="M0 23L40 21L47 24L52 24L96 29V96H0Z" fill="url(#tg1)"/><path d="M43 25L52 25L54 80L44 82Z" fill="#101010"/><path d="M46 2L50 2L51 14L47 15Z" fill="#e0e0e0"/><path d="M47 14L52 14L51 26L46 26Z" fill="#909090"/></g><rect width="96" height="96" filter="url(#tnz)" opacity="0.4" style="mix-blend-mode:overlay"/></svg>
<div class="t" style="left:669.5px;top:968.2px;font-size:11.3px;letter-spacing:-0.35px">10:22:15 AM</div>
<div class="a" style="left:768px;top:840px;width:145px;height:145px;border:1px solid #6e6e6e;background:#f0f0f0"></div>
<div class="a" style="left:774px;top:846px;width:133px;height:133px;background:#ffff00"></div>
<div class="t b" style="left:779.5px;top:857.8px;font-size:11.5px">OD</div>
<div class="t b" style="left:787.5px;top:925.3px;font-size:11.5px">2</div>
<div class="t" style="left:833.5px;top:850.4px;width:40px;text-align:center;font-size:11.3px;letter-spacing:-0.3px;text-decoration:underline">Saved</div>
<svg class="a" style="left:806px;top:863px" width="96" height="96" viewBox="0 0 96 96"><defs><linearGradient id="tg2" gradientUnits="userSpaceOnUse" x1="48" y1="23" x2="50.4" y2="70"><stop offset="0.000" stop-color="rgb(14,14,14)"/><stop offset="0.064" stop-color="rgb(185,185,185)"/><stop offset="0.149" stop-color="rgb(150,150,150)"/><stop offset="0.298" stop-color="rgb(120,120,120)"/><stop offset="0.319" stop-color="rgb(60,60,60)"/><stop offset="0.404" stop-color="rgb(60,60,60)"/><stop offset="0.426" stop-color="rgb(150,150,150)"/><stop offset="0.574" stop-color="rgb(175,175,175)"/><stop offset="0.617" stop-color="rgb(120,120,120)"/><stop offset="0.745" stop-color="rgb(110,110,110)"/><stop offset="0.872" stop-color="rgb(40,40,40)"/><stop offset="1.000" stop-color="rgb(14,14,14)"/></linearGradient></defs><rect width="96" height="96" fill="#141414"/><g filter="url(#tb)"><path d="M0 27L45 26L50 24L55 25L96 27V96H0Z" fill="url(#tg2)"/><path d="M45 27L54 27L55 85L46 85Z" fill="#101010"/><circle cx="46" cy="45" r="2" fill="#d0d0d0"/><path d="M46 6L50 6L51 24L47 25Z" fill="#c8c8c8"/></g><rect width="96" height="96" filter="url(#tnz)" opacity="0.4" style="mix-blend-mode:overlay"/></svg>
<div class="t" style="left:824.5px;top:968.2px;font-size:11.3px;letter-spacing:-0.35px">10:24:15 AM</div>
<div class="a" style="left:923px;top:840px;width:145px;height:145px;border:1px solid #6e6e6e;background:#8ee68e"></div>
<div class="a" style="left:929px;top:846px;width:135px;height:135px;background:#ee82ee"></div>
<div class="t b" style="left:935.5px;top:857.8px;font-size:11.5px">OS</div>
<div class="t b" style="left:942.5px;top:925.3px;font-size:11.5px">3</div>
<div class="t" style="left:989px;top:850.4px;font-size:11.3px;letter-spacing:-0.35px;text-decoration:underline">Pending</div>
<div class="a" style="left:994px;top:865px;width:30px;height:30px;background:#fff;border-right:1px solid #a8b8d0;border-bottom:1px solid #a8b8d0"></div>
<svg class="a" style="left:994px;top:865px" width="30" height="30"><circle cx="15" cy="11" r="8" fill="#f0ee30" stroke="#c8b800" stroke-width="1"/><path d="M11 17H19V24H11Z" fill="#444"/><path d="M12 25H18L16 28H14Z" fill="#222"/></svg>
<div class="t" style="left:965.3px;top:902.1px;font-size:11.3px;letter-spacing:-0.45px">Rectangular</div><div class="t" style="left:965.3px;top:915.0px;font-size:11.3px;letter-spacing:-0.45px">3.0mm x 3.0mm @</div><div class="t" style="left:965.3px;top:927.9px;font-size:11.3px;letter-spacing:-0.45px">0.0, 1000 x 100 x</div><div class="t" style="left:965.3px;top:940.8px;font-size:11.3px;letter-spacing:-0.45px">1 x 1, (6 sec.)</div>
<div class="a" style="left:1078px;top:840px;width:145px;height:145px;border:1px solid #6e6e6e;background:#f0f0f0"></div>
<div class="a" style="left:1084px;top:846px;width:136px;height:135px;background:#ee82ee"></div>
<div class="t b" style="left:1090.5px;top:857.8px;font-size:11.5px">OS</div>
<div class="t b" style="left:1097.5px;top:925.3px;font-size:11.5px">4</div>
<div class="t" style="left:1144px;top:850.4px;font-size:11.3px;letter-spacing:-0.35px;text-decoration:underline">Pending</div>
<div class="a" style="left:1149px;top:865px;width:30px;height:30px;background:#fff;border-right:1px solid #a8b8d0;border-bottom:1px solid #a8b8d0"></div>
<svg class="a" style="left:1149px;top:865px" width="30" height="30"><circle cx="15" cy="11" r="8" fill="#f0ee30" stroke="#c8b800" stroke-width="1"/><path d="M11 17H19V24H11Z" fill="#444"/><path d="M12 25H18L16 28H14Z" fill="#222"/></svg>
<div class="t" style="left:1120.3px;top:902.1px;font-size:11.3px;letter-spacing:-0.45px">Radial 3.0mm,</div><div class="t" style="left:1120.3px;top:915.0px;font-size:11.3px;letter-spacing:-0.45px">1000 x 4 x 20 x 1,</div><div class="t" style="left:1120.3px;top:927.9px;font-size:11.3px;letter-spacing:-0.45px">(5 sec.)</div>
</div>

<!-- status + taskbar -->
<div id="status">
<div class="a" style="left:0;top:1013px;width:1918px;height:1px;background:#fff"></div>
<div class="a" style="left:0;top:1014px;width:1920px;height:1px;background:#d4d4d4"></div>
<div class="a" style="left:0;top:1016px;width:199px;height:24px;border-left:2px solid #6e6e6e;border-top:2px solid #6e6e6e;border-right:1px solid #fff;border-bottom:1px solid #fff"></div>
<div class="a" style="left:200px;top:1016px;width:200px;height:24px;border-left:2px solid #6e6e6e;border-top:2px solid #6e6e6e;border-right:1px solid #fff;border-bottom:1px solid #fff"></div>
<div class="a" style="left:400px;top:1016px;width:150px;height:24px;border-left:2px solid #6e6e6e;border-top:2px solid #6e6e6e;border-right:1px solid #fff;border-bottom:1px solid #fff"></div>
<div class="a" style="left:550px;top:1016px;width:151px;height:24px;border-left:2px solid #6e6e6e;border-top:2px solid #6e6e6e;border-right:1px solid #fff;border-bottom:1px solid #fff"></div>
<div class="a" style="left:701px;top:1016px;width:1219px;height:24px;border-left:2px solid #6e6e6e;border-top:2px solid #6e6e6e;border-bottom:1px solid #fff"></div>
<div class="t" style="left:4px;top:1023.5px;font-size:11.5px">OK</div>
<div class="t" style="left:204.3px;top:1023.5px;font-size:11.5px">Idle</div>
<div class="t b" style="left:440.6px;top:1023.5px;font-size:11.5px;letter-spacing:0.05px;color:#2ecc40">Start Aiming</div>
<div class="t b" style="left:590.6px;top:1023.5px;font-size:11.5px;letter-spacing:0.05px;color:#1ec8d8">Start Aiming</div>
<!-- taskbar -->
<div class="a" style="left:0;top:1040px;width:1920px;height:40px;background:#000"></div>
<svg class="a" style="left:15px;top:1051px" width="18" height="18"><path d="M0 2.5L7.5 1.4V8.5H0Z M8.5 1.2L18 0V8.5H8.5Z M0 9.5H7.5V16.6L0 15.5Z M8.5 9.5H18V18L8.5 16.8Z" fill="#fff"/></svg>
<svg class="a" style="left:61px;top:1051px" width="22" height="18"><rect x="4" y="2" width="14" height="14" fill="none" stroke="#fff" stroke-width="1.2"/><path d="M1 4V14M21 4V14" stroke="#fff" stroke-width="1.2"/></svg>
<div class="a" style="left:148px;top:1040px;width:48px;height:40px;background:#333"></div>
<svg class="a" style="left:111px;top:1049px" width="24" height="22"><path d="M1 4H9L11 6H23V20H1Z" fill="#f3c44a"/><rect x="1" y="9" width="22" height="11" fill="#ffd96a"/><rect x="8" y="14" width="8" height="6" fill="#2a8ad8"/></svg>
<div class="a" style="left:160px;top:1047px;width:25px;height:26px;background:#fff"></div>
<svg class="a" style="left:161px;top:1048px" width="23" height="17"><path d="M2 2H18L21 8L18 14H2Z" fill="#2f9fb0"/><path d="M2 8H20L18 14H2Z" fill="#1a4a6a"/></svg>
<div class="a" style="left:208px;top:1048px;width:20px;height:14px;border-radius:50%;background:#d0d0d0;border:2px solid #c03030"></div>
<svg class="a" style="left:210px;top:1052px" width="22" height="20"><path d="M4 2L16 16M16 2L4 16" stroke="#3a70c0" stroke-width="2"/><circle cx="5" cy="16" r="3" fill="none" stroke="#3a70c0" stroke-width="2"/><circle cx="15" cy="16" r="3" fill="none" stroke="#3a70c0" stroke-width="2"/></svg>
<svg class="a" style="left:257px;top:1048px" width="26" height="24"><ellipse cx="11" cy="14" rx="10" ry="8" fill="#e8e0d0"/><circle cx="7" cy="11" r="2" fill="#e03030"/><circle cx="12" cy="9" r="2" fill="#30a030"/><circle cx="6" cy="16" r="2" fill="#3060d0"/><path d="M14 18L24 2" stroke="#c08040" stroke-width="3"/></svg>
<div class="a" style="left:103px;top:1077px;width:40px;height:3px;background:#76b9ed"></div>
<div class="a" style="left:148px;top:1077px;width:48px;height:3px;background:#76b9ed"></div>
<div class="a" style="left:201px;top:1077px;width:40px;height:3px;background:#76b9ed"></div>
<div class="a" style="left:250px;top:1077px;width:40px;height:3px;background:#76b9ed"></div>
<!-- tray -->
<svg class="a" style="left:1735px;top:1054px" width="14" height="9"><path d="M1 8L7 2L13 8" stroke="#fff" fill="none" stroke-width="1.2"/></svg>
<svg class="a" style="left:1758px;top:1052px" width="20" height="16"><path d="M1 5H4L8 1V15L4 11H1Z" fill="none" stroke="#fff" stroke-width="1.1"/><path d="M11 5Q13 8 11 11M14 3Q17 8 14 13M17 1Q21 8 17 15" fill="none" stroke="#fff" stroke-width="1.1"/></svg>
<svg class="a" style="left:1783px;top:1053px" width="18" height="16"><rect x="4" y="2" width="13" height="9" fill="none" stroke="#fff" stroke-width="1.1"/><path d="M10 11V14M6 14H14" stroke="#fff" stroke-width="1.1"/><rect x="1" y="1" width="5" height="4" fill="none" stroke="#fff" stroke-width="1"/></svg>
<div class="t" style="left:1810.3px;top:1045.1px;font-size:11.8px;color:#fff">10:26 AM</div>
<div class="t" style="left:1808.6px;top:1062.8px;font-size:11.8px;color:#fff">9/15/2022</div>
<svg class="a" style="left:1878px;top:1051px" width="20" height="18"><path d="M1 1H19V13H12L9 17V13H1Z" fill="none" stroke="#fff" stroke-width="1.2"/></svg>
<div class="a" style="left:1918px;top:1040px;width:2px;height:40px;background:#333"></div>
</div>

<div class="a" style="left:1885px;top:18.5px;width:35px;height:18.5px;background:#ffffe1;border:1px solid #646464"></div>
<div class="t" style="left:1888.5px;top:23.2px;font-size:11px;letter-spacing:-0.1px">Close</div>
</body></html>
